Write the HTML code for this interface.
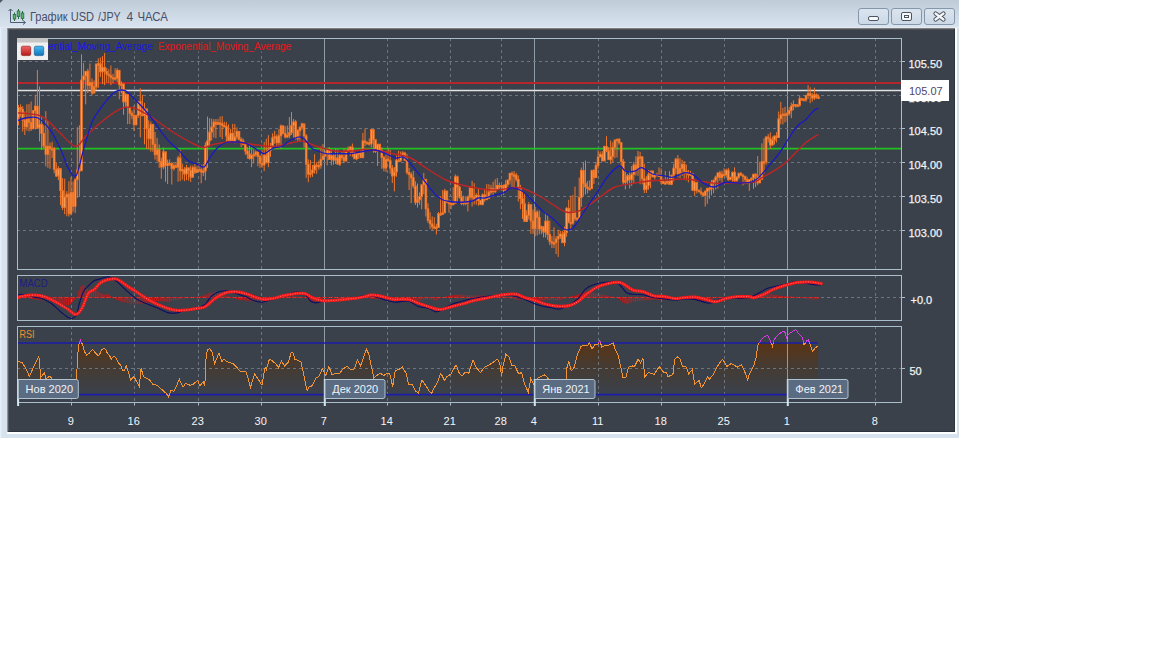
<!DOCTYPE html><html><head><meta charset="utf-8"><style>html,body{margin:0;padding:0;background:#fff;width:1152px;height:648px;overflow:hidden}svg{position:absolute;left:0;top:0;font-family:"Liberation Sans",sans-serif}</style></head><body>
<svg width="1152" height="648" viewBox="0 0 1152 648">
<defs><linearGradient id="tb" x1="0" y1="0" x2="0" y2="1"><stop offset="0" stop-color="#bfccd8"/><stop offset="1" stop-color="#d8e3ef"/></linearGradient><linearGradient id="btn" x1="0" y1="0" x2="0" y2="1"><stop offset="0" stop-color="#dbe5ef"/><stop offset="1" stop-color="#cbd8e5"/></linearGradient><linearGradient id="rsif" x1="0" y1="343" x2="0" y2="392" gradientUnits="userSpaceOnUse"><stop offset="0" stop-color="#5a3414"/><stop offset="0.45" stop-color="#463a30"/><stop offset="1" stop-color="#3b414a"/></linearGradient><linearGradient id="lr" x1="0" y1="0" x2="0" y2="1"><stop offset="0" stop-color="#f26464"/><stop offset="1" stop-color="#b41a1a"/></linearGradient><linearGradient id="lb" x1="0" y1="0" x2="0" y2="1"><stop offset="0" stop-color="#44bcf2"/><stop offset="1" stop-color="#1272ba"/></linearGradient><clipPath id="cm"><rect x="18" y="39" width="883" height="230"/></clipPath><clipPath id="cmacd"><rect x="18" y="276" width="883" height="44"/></clipPath><clipPath id="cr"><rect x="18" y="327" width="883" height="75"/></clipPath><clipPath id="above70"><rect x="0" y="0" width="1152" height="343"/></clipPath><clipPath id="below70"><rect x="0" y="343" width="1152" height="100"/></clipPath></defs>
<rect x="0" y="0" width="959" height="438" fill="#d6e3ef"/>
<rect x="0" y="28" width="1.5" height="410" fill="#e6eef7"/>
<rect x="0" y="0" width="959" height="27" fill="url(#tb)"/>
<rect x="0" y="27" width="959" height="1" fill="#e2eaf3"/>
<rect x="957" y="28" width="2" height="406" fill="#d8e0e7"/>
<rect x="7" y="28" width="950" height="406" fill="#fbfdff"/>
<rect x="7" y="28" width="948" height="404" fill="#3b414b"/>
<rect x="7" y="28" width="948" height="1" fill="#7e7d7b"/><rect x="8" y="29" width="947" height="1" fill="#50545a"/>
<rect x="7" y="28" width="1" height="404" fill="#8e949c"/><rect x="8" y="29" width="1" height="403" fill="#535962"/>
<rect x="954" y="29" width="1" height="403" fill="#30363e"/><rect x="8" y="431" width="947" height="1" fill="#2e333b"/>
<path d="M0 0 H3 L0 3 Z" fill="#505860"/>
<g stroke="#4c5a72" fill="none" stroke-width="1"><path d="M10.5 9 V22.5 H25"/><path d="M23 20.5 L25.5 22.5 L23 24.5"/><path d="M8.5 11 L10.5 9 L12.5 11"/></g>
<g stroke="#2f6a48" stroke-width="1"><path d="M14.5 12.5 V21 M18.5 9 V19 M22.5 11 V20.5"/></g>
<g fill="#5cb070" stroke="#2a6a44" stroke-width="0.8"><rect x="13.2" y="14.5" width="2.6" height="4.5"/><rect x="17.2" y="11" width="2.6" height="5.5"/><rect x="21.2" y="13" width="2.6" height="5.5"/></g>
<text x="29.9" y="20.8" font-size="12" fill="#484e68" textLength="64.2" lengthAdjust="spacingAndGlyphs">График USD</text>
<text x="98.1" y="20.8" font-size="12" fill="#484e68" textLength="22.6" lengthAdjust="spacingAndGlyphs">/JPY</text>
<text x="126.6" y="20.8" font-size="12" fill="#484e68">4</text>
<text x="137.4" y="20.8" font-size="12" fill="#484e68" textLength="30.5" lengthAdjust="spacingAndGlyphs">ЧАСА</text>
<rect x="858.5" y="8.5" width="30" height="16" rx="2.5" fill="url(#btn)" stroke="#8597ab"/>
<rect x="891.5" y="8.5" width="30" height="16" rx="2.5" fill="url(#btn)" stroke="#8597ab"/>
<rect x="924.5" y="8.5" width="30" height="16" rx="2.5" fill="url(#btn)" stroke="#8597ab"/>
<rect x="868.5" y="16.5" width="10" height="4" rx="1.5" fill="#f6f7f9" stroke="#4c5460"/>
<rect x="901.5" y="12.5" width="10" height="8" rx="1.5" fill="#f6f7f9" stroke="#4c5460"/><rect x="904.5" y="15.5" width="4" height="2" fill="none" stroke="#4c5460"/>
<path d="M935.5 13.5 L943.5 19.5 M943.5 13.5 L935.5 19.5" stroke="#4c5460" stroke-width="4.2" stroke-linecap="round"/><path d="M935.5 13.5 L943.5 19.5 M943.5 13.5 L935.5 19.5" stroke="#f6f7f9" stroke-width="2.2" stroke-linecap="round"/>
<g clip-path="url(#cr)"><g clip-path="url(#below70)"><polygon points="17.9,361.2 22.6,363.0 26.5,369.7 29.3,376.4 34.0,366.0 38.9,356.4 40.8,377.4 44.6,372.6 45.6,379.3 50.0,376.0 55.0,384.0 60.0,380.0 65.0,392.0 70.4,398.4 76.5,378.2 77.7,355.8 78.5,345.8 80.4,340.4 82.7,345.0 84.3,351.2 86.6,355.4 88.9,353.5 92.4,349.3 95.0,352.4 98.1,355.4 99.7,354.3 101.6,349.3 104.7,348.5 105.9,349.7 107.4,353.5 109.3,355.0 111.3,359.3 113.6,356.2 115.9,357.4 118.2,362.8 120.5,365.1 122.8,370.9 124.4,370.5 126.3,365.5 128.2,371.3 130.6,379.8 133.6,377.0 134.4,377.4 139.3,386.5 141.1,368.3 143.5,376.8 149.0,379.3 152.7,384.1 157.5,385.3 161.2,389.0 166.6,393.8 168.5,396.9 170.9,390.2 174.0,391.4 179.4,379.3 183.0,387.2 185.5,383.5 190.3,385.3 193.4,384.1 197.6,380.5 200.0,385.9 203.1,381.7 204.9,385.3 205.5,362.2 207.3,350.1 209.8,348.3 212.2,352.5 214.6,363.5 218.9,353.1 221.9,361.6 223.7,359.2 228.0,362.2 232.9,363.5 236.5,367.1 240.2,371.4 246.2,372.0 250.5,387.2 254.7,373.8 262.0,385.3 265.1,367.1 266.3,370.1 268.7,361.0 270.0,359.2 272.4,361.0 275.5,363.5 278.5,367.7 281.5,361.0 284.6,365.9 288.2,362.2 291.3,352.5 293.1,353.1 294.9,359.2 298.0,360.4 301.0,362.2 303.4,373.2 307.1,390.8 309.5,386.5 311.9,385.9 316.2,378.0 318.6,376.8 322.3,368.9 325.9,375.6 328.9,366.5 332.0,375.0 335.6,373.2 339.3,373.8 342.9,368.9 347.2,366.5 350.8,369.5 354.5,368.9 357.5,359.8 360.5,365.9 363.6,357.4 366.6,348.9 369.0,355.0 371.5,367.1 373.9,378.0 378.2,374.4 380.6,373.2 383.6,375.6 386.7,373.8 389.7,373.2 392.7,386.5 395.2,370.7 398.8,369.5 402.5,367.1 406.1,373.2 408.5,384.1 412.3,384.1 415.3,390.8 418.3,393.2 422.0,379.9 425.6,385.3 429.3,391.4 431.7,393.2 433.5,389.0 437.2,382.9 440.8,373.2 444.5,380.5 446.9,376.8 451.1,373.8 456.0,364.7 459.0,372.6 462.1,376.2 465.1,372.0 468.8,373.2 473.0,359.8 476.0,367.1 480.3,372.6 484.6,367.1 489.4,364.7 493.1,362.2 497.3,359.2 499.7,362.8 501.6,375.6 502.8,367.1 505.8,354.3 508.9,356.8 511.9,365.3 514.9,365.9 518.6,373.8 521.6,372.6 524.7,384.1 528.3,392.6 530.7,378.6 533.8,384.7 538.0,378.0 542.8,375.6 544.6,375.0 547.0,376.8 552.0,385.0 558.0,382.0 563.0,386.0 566.5,378.0 567.1,365.9 568.9,361.6 571.3,370.7 574.4,367.1 576.8,356.2 581.0,346.4 583.5,345.2 587.7,345.2 589.5,342.8 592.0,348.9 595.0,344.6 598.0,344.0 599.9,340.4 601.7,347.1 604.1,345.8 607.8,345.8 611.4,344.0 613.2,342.8 615.1,348.9 618.1,355.0 620.5,365.9 623.0,378.0 626.0,377.4 628.4,367.1 632.1,365.9 634.5,366.5 638.2,359.2 640.6,362.8 643.0,358.6 644.8,376.8 648.5,372.6 654.0,374.4 659.4,366.5 663.7,372.6 666.7,372.6 668.0,376.8 672.9,374.4 674.7,359.2 677.7,356.8 680.2,359.2 682.6,366.5 686.2,367.1 688.7,373.8 692.3,369.5 694.7,384.1 699.0,380.5 701.4,387.8 704.5,383.5 707.5,376.8 709.3,379.3 713.0,375.0 716.6,367.7 720.3,362.2 722.7,359.2 726.9,366.5 731.2,363.5 737.3,367.1 741.5,364.7 744.6,371.4 747.6,379.9 749.4,373.8 753.7,365.9 756.1,357.4 757.9,345.2 760.4,341.0 764.0,336.7 767.6,335.5 770.1,340.4 772.5,346.4 774.3,339.2 778.6,334.3 782.2,331.9 784.7,331.3 786.5,337.9 788.3,334.3 795.6,329.4 799.2,334.3 802.3,337.3 804.1,345.2 806.5,341.0 808.5,340.0 812.5,351.6 815.0,348.0 818.2,345.9 818.2,402.0 17.9,402.0" fill="url(#rsif)"/></g></g>
<line x1="71.5" y1="38" x2="71.5" y2="269" stroke="#6a757f" stroke-dasharray="3 3"/>
<line x1="134.5" y1="38" x2="134.5" y2="269" stroke="#6a757f" stroke-dasharray="3 3"/>
<line x1="198.5" y1="38" x2="198.5" y2="269" stroke="#6a757f" stroke-dasharray="3 3"/>
<line x1="261.5" y1="38" x2="261.5" y2="269" stroke="#6a757f" stroke-dasharray="3 3"/>
<line x1="387.5" y1="38" x2="387.5" y2="269" stroke="#6a757f" stroke-dasharray="3 3"/>
<line x1="450.5" y1="38" x2="450.5" y2="269" stroke="#6a757f" stroke-dasharray="3 3"/>
<line x1="501.5" y1="38" x2="501.5" y2="269" stroke="#6a757f" stroke-dasharray="3 3"/>
<line x1="598.5" y1="38" x2="598.5" y2="269" stroke="#6a757f" stroke-dasharray="3 3"/>
<line x1="661.5" y1="38" x2="661.5" y2="269" stroke="#6a757f" stroke-dasharray="3 3"/>
<line x1="724.5" y1="38" x2="724.5" y2="269" stroke="#6a757f" stroke-dasharray="3 3"/>
<line x1="875.5" y1="38" x2="875.5" y2="269" stroke="#6a757f" stroke-dasharray="3 3"/>
<line x1="324.5" y1="39" x2="324.5" y2="269" stroke="#8e9ba8"/>
<line x1="534.5" y1="39" x2="534.5" y2="269" stroke="#8e9ba8"/>
<line x1="787.5" y1="39" x2="787.5" y2="269" stroke="#8e9ba8"/>
<line x1="71.5" y1="275" x2="71.5" y2="320" stroke="#6a757f" stroke-dasharray="3 3"/>
<line x1="134.5" y1="275" x2="134.5" y2="320" stroke="#6a757f" stroke-dasharray="3 3"/>
<line x1="198.5" y1="275" x2="198.5" y2="320" stroke="#6a757f" stroke-dasharray="3 3"/>
<line x1="261.5" y1="275" x2="261.5" y2="320" stroke="#6a757f" stroke-dasharray="3 3"/>
<line x1="387.5" y1="275" x2="387.5" y2="320" stroke="#6a757f" stroke-dasharray="3 3"/>
<line x1="450.5" y1="275" x2="450.5" y2="320" stroke="#6a757f" stroke-dasharray="3 3"/>
<line x1="501.5" y1="275" x2="501.5" y2="320" stroke="#6a757f" stroke-dasharray="3 3"/>
<line x1="598.5" y1="275" x2="598.5" y2="320" stroke="#6a757f" stroke-dasharray="3 3"/>
<line x1="661.5" y1="275" x2="661.5" y2="320" stroke="#6a757f" stroke-dasharray="3 3"/>
<line x1="724.5" y1="275" x2="724.5" y2="320" stroke="#6a757f" stroke-dasharray="3 3"/>
<line x1="875.5" y1="275" x2="875.5" y2="320" stroke="#6a757f" stroke-dasharray="3 3"/>
<line x1="324.5" y1="276" x2="324.5" y2="320" stroke="#8e9ba8"/>
<line x1="534.5" y1="276" x2="534.5" y2="320" stroke="#8e9ba8"/>
<line x1="787.5" y1="276" x2="787.5" y2="320" stroke="#8e9ba8"/>
<line x1="71.5" y1="326" x2="71.5" y2="402" stroke="#6a757f" stroke-dasharray="3 3"/>
<line x1="134.5" y1="326" x2="134.5" y2="402" stroke="#6a757f" stroke-dasharray="3 3"/>
<line x1="198.5" y1="326" x2="198.5" y2="402" stroke="#6a757f" stroke-dasharray="3 3"/>
<line x1="261.5" y1="326" x2="261.5" y2="402" stroke="#6a757f" stroke-dasharray="3 3"/>
<line x1="387.5" y1="326" x2="387.5" y2="402" stroke="#6a757f" stroke-dasharray="3 3"/>
<line x1="450.5" y1="326" x2="450.5" y2="402" stroke="#6a757f" stroke-dasharray="3 3"/>
<line x1="501.5" y1="326" x2="501.5" y2="402" stroke="#6a757f" stroke-dasharray="3 3"/>
<line x1="598.5" y1="326" x2="598.5" y2="402" stroke="#6a757f" stroke-dasharray="3 3"/>
<line x1="661.5" y1="326" x2="661.5" y2="402" stroke="#6a757f" stroke-dasharray="3 3"/>
<line x1="724.5" y1="326" x2="724.5" y2="402" stroke="#6a757f" stroke-dasharray="3 3"/>
<line x1="875.5" y1="326" x2="875.5" y2="402" stroke="#6a757f" stroke-dasharray="3 3"/>
<line x1="324.5" y1="327" x2="324.5" y2="402" stroke="#8e9ba8"/>
<line x1="534.5" y1="327" x2="534.5" y2="402" stroke="#8e9ba8"/>
<line x1="787.5" y1="327" x2="787.5" y2="402" stroke="#8e9ba8"/>
<line x1="17" y1="61.5" x2="901" y2="61.5" stroke="#6a757f" stroke-dasharray="3 3"/>
<line x1="17" y1="95.5" x2="901" y2="95.5" stroke="#6a757f" stroke-dasharray="3 3"/>
<line x1="17" y1="128.5" x2="901" y2="128.5" stroke="#6a757f" stroke-dasharray="3 3"/>
<line x1="17" y1="162.5" x2="901" y2="162.5" stroke="#6a757f" stroke-dasharray="3 3"/>
<line x1="17" y1="196.5" x2="901" y2="196.5" stroke="#6a757f" stroke-dasharray="3 3"/>
<line x1="17" y1="230.5" x2="901" y2="230.5" stroke="#6a757f" stroke-dasharray="3 3"/>
<line x1="17" y1="297.5" x2="901" y2="297.5" stroke="#6a757f" stroke-dasharray="3 3"/>
<line x1="17" y1="368.5" x2="901" y2="368.5" stroke="#6a757f" stroke-dasharray="3 3"/>
<line x1="18" y1="83" x2="901" y2="83" stroke="#b3262c" stroke-width="2"/>
<line x1="18" y1="90.5" x2="901" y2="90.5" stroke="#e2e2e2" stroke-width="1.6"/>
<line x1="18" y1="148.6" x2="901" y2="148.6" stroke="#22c022" stroke-width="1.8"/>
<g clip-path="url(#cm)">
<line x1="18.5" y1="104.9" x2="18.5" y2="125.3" stroke="#f27628"/><line x1="20.6" y1="104.3" x2="20.6" y2="116.7" stroke="#f27628"/><line x1="22.7" y1="106.2" x2="22.7" y2="131.6" stroke="#f27628"/><line x1="24.8" y1="111.5" x2="24.8" y2="135.0" stroke="#f27628"/><line x1="26.9" y1="104.3" x2="26.9" y2="130.7" stroke="#f27628"/><line x1="29.0" y1="104.1" x2="29.0" y2="131.5" stroke="#f27628"/><line x1="31.1" y1="101.5" x2="31.1" y2="130.9" stroke="#f27628"/><line x1="33.2" y1="110.2" x2="33.2" y2="126.2" stroke="#f27628"/><line x1="35.3" y1="94.8" x2="35.3" y2="129.4" stroke="#f27628"/><line x1="37.4" y1="70.0" x2="37.4" y2="125.5" stroke="#f27628"/><line x1="39.5" y1="86.4" x2="39.5" y2="141.3" stroke="#f27628"/><line x1="41.6" y1="116.7" x2="41.6" y2="150.0" stroke="#f27628"/><line x1="43.7" y1="125.3" x2="43.7" y2="148.3" stroke="#f27628"/><line x1="45.8" y1="111.2" x2="45.8" y2="166.4" stroke="#f27628"/><line x1="47.9" y1="121.0" x2="47.9" y2="167.8" stroke="#f27628"/><line x1="50.0" y1="142.7" x2="50.0" y2="168.8" stroke="#f27628"/><line x1="52.1" y1="141.9" x2="52.1" y2="158.0" stroke="#f27628"/><line x1="54.2" y1="146.9" x2="54.2" y2="173.3" stroke="#f27628"/><line x1="56.3" y1="162.3" x2="56.3" y2="177.0" stroke="#f27628"/><line x1="58.4" y1="166.2" x2="58.4" y2="180.1" stroke="#f27628"/><line x1="60.5" y1="174.0" x2="60.5" y2="205.2" stroke="#f27628"/><line x1="62.6" y1="178.1" x2="62.6" y2="210.0" stroke="#f27628"/><line x1="64.7" y1="178.7" x2="64.7" y2="214.2" stroke="#f27628"/><line x1="66.8" y1="191.1" x2="66.8" y2="216.2" stroke="#f27628"/><line x1="68.9" y1="181.3" x2="68.9" y2="216.5" stroke="#f27628"/><line x1="71.0" y1="177.2" x2="71.0" y2="215.3" stroke="#f27628"/><line x1="73.1" y1="181.5" x2="73.1" y2="211.8" stroke="#f27628"/><line x1="75.2" y1="178.5" x2="75.2" y2="213.2" stroke="#f27628"/><line x1="77.3" y1="127.3" x2="77.3" y2="197.8" stroke="#f27628"/><line x1="79.4" y1="125.2" x2="79.4" y2="196.3" stroke="#f27628"/><line x1="81.5" y1="54.4" x2="81.5" y2="99.0" stroke="#f27628"/><line x1="83.6" y1="63.0" x2="83.6" y2="88.8" stroke="#f27628"/><line x1="85.7" y1="71.2" x2="85.7" y2="104.4" stroke="#f27628"/><line x1="87.8" y1="68.7" x2="87.8" y2="93.0" stroke="#f27628"/><line x1="89.9" y1="63.4" x2="89.9" y2="88.8" stroke="#f27628"/><line x1="92.0" y1="78.4" x2="92.0" y2="95.6" stroke="#f27628"/><line x1="94.1" y1="80.4" x2="94.1" y2="92.8" stroke="#f27628"/><line x1="96.2" y1="63.4" x2="96.2" y2="89.9" stroke="#f27628"/><line x1="98.3" y1="58.3" x2="98.3" y2="87.9" stroke="#f27628"/><line x1="100.4" y1="57.6" x2="100.4" y2="76.9" stroke="#f27628"/><line x1="102.5" y1="56.1" x2="102.5" y2="84.1" stroke="#f27628"/><line x1="104.6" y1="53.0" x2="104.6" y2="85.2" stroke="#f27628"/><line x1="106.7" y1="67.8" x2="106.7" y2="82.8" stroke="#f27628"/><line x1="108.8" y1="69.2" x2="108.8" y2="83.0" stroke="#f27628"/><line x1="110.9" y1="65.5" x2="110.9" y2="85.2" stroke="#f27628"/><line x1="113.0" y1="73.8" x2="113.0" y2="83.3" stroke="#f27628"/><line x1="115.1" y1="68.3" x2="115.1" y2="80.8" stroke="#f27628"/><line x1="117.2" y1="68.0" x2="117.2" y2="82.0" stroke="#f27628"/><line x1="119.3" y1="73.8" x2="119.3" y2="99.3" stroke="#f27628"/><line x1="121.4" y1="81.3" x2="121.4" y2="93.6" stroke="#f27628"/><line x1="123.5" y1="85.6" x2="123.5" y2="114.8" stroke="#f27628"/><line x1="125.6" y1="93.1" x2="125.6" y2="106.6" stroke="#f27628"/><line x1="127.7" y1="95.2" x2="127.7" y2="124.2" stroke="#f27628"/><line x1="129.8" y1="106.9" x2="129.8" y2="124.0" stroke="#f27628"/><line x1="131.9" y1="110.5" x2="131.9" y2="119.2" stroke="#f27628"/><line x1="134.0" y1="105.6" x2="134.0" y2="131.0" stroke="#f27628"/><line x1="136.1" y1="114.7" x2="136.1" y2="125.8" stroke="#f27628"/><line x1="138.2" y1="101.7" x2="138.2" y2="118.0" stroke="#f27628"/><line x1="140.3" y1="88.3" x2="140.3" y2="137.3" stroke="#f27628"/><line x1="142.4" y1="94.9" x2="142.4" y2="115.9" stroke="#f27628"/><line x1="144.5" y1="102.8" x2="144.5" y2="144.3" stroke="#f27628"/><line x1="146.6" y1="116.1" x2="146.6" y2="149.0" stroke="#f27628"/><line x1="148.7" y1="120.3" x2="148.7" y2="149.2" stroke="#f27628"/><line x1="150.8" y1="121.7" x2="150.8" y2="151.6" stroke="#f27628"/><line x1="152.9" y1="125.1" x2="152.9" y2="151.8" stroke="#f27628"/><line x1="155.0" y1="132.0" x2="155.0" y2="159.6" stroke="#f27628"/><line x1="157.1" y1="137.9" x2="157.1" y2="161.3" stroke="#f27628"/><line x1="159.2" y1="144.5" x2="159.2" y2="167.8" stroke="#f27628"/><line x1="161.3" y1="157.7" x2="161.3" y2="178.8" stroke="#f27628"/><line x1="163.4" y1="147.6" x2="163.4" y2="169.2" stroke="#f27628"/><line x1="165.5" y1="154.5" x2="165.5" y2="181.7" stroke="#f27628"/><line x1="167.6" y1="159.6" x2="167.6" y2="184.1" stroke="#f27628"/><line x1="169.7" y1="159.4" x2="169.7" y2="165.8" stroke="#f27628"/><line x1="171.8" y1="162.1" x2="171.8" y2="184.5" stroke="#f27628"/><line x1="173.9" y1="163.3" x2="173.9" y2="170.6" stroke="#f27628"/><line x1="176.0" y1="162.1" x2="176.0" y2="167.8" stroke="#f27628"/><line x1="178.1" y1="155.9" x2="178.1" y2="181.7" stroke="#f27628"/><line x1="180.2" y1="149.8" x2="180.2" y2="181.2" stroke="#f27628"/><line x1="182.3" y1="163.7" x2="182.3" y2="179.6" stroke="#f27628"/><line x1="184.4" y1="167.1" x2="184.4" y2="181.1" stroke="#f27628"/><line x1="186.5" y1="164.8" x2="186.5" y2="180.2" stroke="#f27628"/><line x1="188.6" y1="167.7" x2="188.6" y2="180.6" stroke="#f27628"/><line x1="190.7" y1="165.5" x2="190.7" y2="182.1" stroke="#f27628"/><line x1="192.8" y1="165.5" x2="192.8" y2="177.3" stroke="#f27628"/><line x1="194.9" y1="163.8" x2="194.9" y2="174.0" stroke="#f27628"/><line x1="197.0" y1="166.2" x2="197.0" y2="173.1" stroke="#f27628"/><line x1="199.1" y1="164.0" x2="199.1" y2="170.6" stroke="#f27628"/><line x1="201.2" y1="164.9" x2="201.2" y2="183.3" stroke="#f27628"/><line x1="203.3" y1="164.0" x2="203.3" y2="176.1" stroke="#f27628"/><line x1="205.4" y1="142.4" x2="205.4" y2="180.3" stroke="#f27628"/><line x1="207.5" y1="116.6" x2="207.5" y2="168.1" stroke="#f27628"/><line x1="209.6" y1="118.2" x2="209.6" y2="146.3" stroke="#f27628"/><line x1="211.7" y1="118.7" x2="211.7" y2="140.4" stroke="#f27628"/><line x1="213.8" y1="119.1" x2="213.8" y2="137.5" stroke="#f27628"/><line x1="215.9" y1="119.0" x2="215.9" y2="138.2" stroke="#f27628"/><line x1="218.0" y1="118.9" x2="218.0" y2="124.9" stroke="#f27628"/><line x1="220.1" y1="116.5" x2="220.1" y2="137.0" stroke="#f27628"/><line x1="222.2" y1="116.2" x2="222.2" y2="139.1" stroke="#f27628"/><line x1="224.3" y1="121.7" x2="224.3" y2="126.9" stroke="#f27628"/><line x1="226.4" y1="122.1" x2="226.4" y2="142.3" stroke="#f27628"/><line x1="228.5" y1="124.4" x2="228.5" y2="143.0" stroke="#f27628"/><line x1="230.6" y1="128.9" x2="230.6" y2="142.0" stroke="#f27628"/><line x1="232.7" y1="123.9" x2="232.7" y2="141.1" stroke="#f27628"/><line x1="234.8" y1="124.1" x2="234.8" y2="143.3" stroke="#f27628"/><line x1="236.9" y1="127.4" x2="236.9" y2="139.6" stroke="#f27628"/><line x1="239.0" y1="131.2" x2="239.0" y2="140.3" stroke="#f27628"/><line x1="241.1" y1="137.2" x2="241.1" y2="147.0" stroke="#f27628"/><line x1="243.2" y1="138.6" x2="243.2" y2="144.8" stroke="#f27628"/><line x1="245.3" y1="143.0" x2="245.3" y2="154.9" stroke="#f27628"/><line x1="247.4" y1="147.0" x2="247.4" y2="158.7" stroke="#f27628"/><line x1="249.5" y1="145.1" x2="249.5" y2="159.6" stroke="#f27628"/><line x1="251.6" y1="147.2" x2="251.6" y2="167.2" stroke="#f27628"/><line x1="253.7" y1="150.0" x2="253.7" y2="163.5" stroke="#f27628"/><line x1="255.8" y1="150.4" x2="255.8" y2="156.7" stroke="#f27628"/><line x1="257.9" y1="150.2" x2="257.9" y2="166.3" stroke="#f27628"/><line x1="260.0" y1="155.0" x2="260.0" y2="167.8" stroke="#f27628"/><line x1="262.1" y1="150.1" x2="262.1" y2="167.7" stroke="#f27628"/><line x1="264.2" y1="141.9" x2="264.2" y2="171.0" stroke="#f27628"/><line x1="266.3" y1="138.8" x2="266.3" y2="163.4" stroke="#f27628"/><line x1="268.4" y1="135.2" x2="268.4" y2="167.2" stroke="#f27628"/><line x1="270.5" y1="142.9" x2="270.5" y2="156.9" stroke="#f27628"/><line x1="272.6" y1="133.4" x2="272.6" y2="147.5" stroke="#f27628"/><line x1="274.7" y1="130.9" x2="274.7" y2="143.8" stroke="#f27628"/><line x1="276.8" y1="134.3" x2="276.8" y2="149.1" stroke="#f27628"/><line x1="278.9" y1="129.0" x2="278.9" y2="147.6" stroke="#f27628"/><line x1="281.0" y1="124.6" x2="281.0" y2="148.8" stroke="#f27628"/><line x1="283.1" y1="125.6" x2="283.1" y2="134.4" stroke="#f27628"/><line x1="285.2" y1="126.3" x2="285.2" y2="138.4" stroke="#f27628"/><line x1="287.3" y1="125.5" x2="287.3" y2="138.1" stroke="#f27628"/><line x1="289.4" y1="117.0" x2="289.4" y2="138.1" stroke="#f27628"/><line x1="291.5" y1="112.1" x2="291.5" y2="135.0" stroke="#f27628"/><line x1="293.6" y1="118.9" x2="293.6" y2="137.5" stroke="#f27628"/><line x1="295.7" y1="119.9" x2="295.7" y2="139.7" stroke="#f27628"/><line x1="297.8" y1="129.0" x2="297.8" y2="141.5" stroke="#f27628"/><line x1="299.9" y1="126.6" x2="299.9" y2="141.2" stroke="#f27628"/><line x1="302.0" y1="122.7" x2="302.0" y2="129.7" stroke="#f27628"/><line x1="304.1" y1="127.1" x2="304.1" y2="147.6" stroke="#f27628"/><line x1="306.2" y1="134.0" x2="306.2" y2="177.8" stroke="#f27628"/><line x1="308.3" y1="159.4" x2="308.3" y2="182.2" stroke="#f27628"/><line x1="310.4" y1="160.2" x2="310.4" y2="177.5" stroke="#f27628"/><line x1="312.5" y1="165.0" x2="312.5" y2="176.8" stroke="#f27628"/><line x1="314.6" y1="154.2" x2="314.6" y2="173.6" stroke="#f27628"/><line x1="316.7" y1="162.2" x2="316.7" y2="173.8" stroke="#f27628"/><line x1="318.8" y1="160.7" x2="318.8" y2="169.7" stroke="#f27628"/><line x1="320.9" y1="146.4" x2="320.9" y2="168.7" stroke="#f27628"/><line x1="323.0" y1="144.1" x2="323.0" y2="160.4" stroke="#f27628"/><line x1="325.1" y1="151.1" x2="325.1" y2="156.6" stroke="#f27628"/><line x1="327.2" y1="148.8" x2="327.2" y2="165.3" stroke="#f27628"/><line x1="329.3" y1="147.0" x2="329.3" y2="160.0" stroke="#f27628"/><line x1="331.4" y1="148.6" x2="331.4" y2="165.3" stroke="#f27628"/><line x1="333.5" y1="154.0" x2="333.5" y2="164.7" stroke="#f27628"/><line x1="335.6" y1="148.6" x2="335.6" y2="164.0" stroke="#f27628"/><line x1="337.7" y1="149.2" x2="337.7" y2="164.1" stroke="#f27628"/><line x1="339.8" y1="152.9" x2="339.8" y2="166.0" stroke="#f27628"/><line x1="341.9" y1="151.6" x2="341.9" y2="160.6" stroke="#f27628"/><line x1="344.0" y1="148.5" x2="344.0" y2="163.2" stroke="#f27628"/><line x1="346.1" y1="150.5" x2="346.1" y2="161.5" stroke="#f27628"/><line x1="348.2" y1="146.5" x2="348.2" y2="152.0" stroke="#f27628"/><line x1="350.3" y1="146.2" x2="350.3" y2="156.1" stroke="#f27628"/><line x1="352.4" y1="143.6" x2="352.4" y2="157.0" stroke="#f27628"/><line x1="354.5" y1="152.1" x2="354.5" y2="158.2" stroke="#f27628"/><line x1="356.6" y1="153.3" x2="356.6" y2="160.3" stroke="#f27628"/><line x1="358.7" y1="152.3" x2="358.7" y2="158.9" stroke="#f27628"/><line x1="360.8" y1="150.6" x2="360.8" y2="157.8" stroke="#f27628"/><line x1="362.9" y1="132.9" x2="362.9" y2="152.9" stroke="#f27628"/><line x1="365.0" y1="128.5" x2="365.0" y2="146.3" stroke="#f27628"/><line x1="367.1" y1="141.2" x2="367.1" y2="143.2" stroke="#f27628"/><line x1="369.2" y1="138.4" x2="369.2" y2="145.7" stroke="#f27628"/><line x1="371.3" y1="129.1" x2="371.3" y2="147.5" stroke="#f27628"/><line x1="373.4" y1="133.7" x2="373.4" y2="152.9" stroke="#f27628"/><line x1="375.5" y1="140.0" x2="375.5" y2="152.9" stroke="#f27628"/><line x1="377.6" y1="144.2" x2="377.6" y2="165.9" stroke="#f27628"/><line x1="379.7" y1="144.2" x2="379.7" y2="151.8" stroke="#f27628"/><line x1="381.8" y1="147.3" x2="381.8" y2="168.8" stroke="#f27628"/><line x1="383.9" y1="155.9" x2="383.9" y2="171.4" stroke="#f27628"/><line x1="386.0" y1="150.8" x2="386.0" y2="172.0" stroke="#f27628"/><line x1="388.1" y1="148.5" x2="388.1" y2="160.7" stroke="#f27628"/><line x1="390.2" y1="150.1" x2="390.2" y2="173.6" stroke="#f27628"/><line x1="392.3" y1="165.0" x2="392.3" y2="183.0" stroke="#f27628"/><line x1="394.4" y1="167.0" x2="394.4" y2="191.3" stroke="#f27628"/><line x1="396.5" y1="155.7" x2="396.5" y2="176.7" stroke="#f27628"/><line x1="398.6" y1="150.8" x2="398.6" y2="162.0" stroke="#f27628"/><line x1="400.7" y1="151.6" x2="400.7" y2="162.0" stroke="#f27628"/><line x1="402.8" y1="151.1" x2="402.8" y2="156.2" stroke="#f27628"/><line x1="404.9" y1="151.9" x2="404.9" y2="160.4" stroke="#f27628"/><line x1="407.0" y1="154.2" x2="407.0" y2="174.6" stroke="#f27628"/><line x1="409.1" y1="168.0" x2="409.1" y2="190.0" stroke="#f27628"/><line x1="411.2" y1="172.2" x2="411.2" y2="203.2" stroke="#f27628"/><line x1="413.3" y1="171.0" x2="413.3" y2="188.4" stroke="#f27628"/><line x1="415.4" y1="181.2" x2="415.4" y2="205.0" stroke="#f27628"/><line x1="417.5" y1="183.6" x2="417.5" y2="207.6" stroke="#f27628"/><line x1="419.6" y1="192.4" x2="419.6" y2="204.9" stroke="#f27628"/><line x1="421.7" y1="184.4" x2="421.7" y2="209.3" stroke="#f27628"/><line x1="423.8" y1="172.9" x2="423.8" y2="194.2" stroke="#f27628"/><line x1="425.9" y1="183.5" x2="425.9" y2="216.6" stroke="#f27628"/><line x1="428.0" y1="203.3" x2="428.0" y2="223.0" stroke="#f27628"/><line x1="430.1" y1="212.4" x2="430.1" y2="229.0" stroke="#f27628"/><line x1="432.2" y1="216.4" x2="432.2" y2="230.3" stroke="#f27628"/><line x1="434.3" y1="217.2" x2="434.3" y2="229.3" stroke="#f27628"/><line x1="436.4" y1="223.7" x2="436.4" y2="234.4" stroke="#f27628"/><line x1="438.5" y1="212.0" x2="438.5" y2="227.0" stroke="#f27628"/><line x1="440.6" y1="196.2" x2="440.6" y2="215.6" stroke="#f27628"/><line x1="442.7" y1="190.0" x2="442.7" y2="214.9" stroke="#f27628"/><line x1="444.8" y1="188.8" x2="444.8" y2="213.5" stroke="#f27628"/><line x1="446.9" y1="192.5" x2="446.9" y2="203.2" stroke="#f27628"/><line x1="449.0" y1="199.4" x2="449.0" y2="212.7" stroke="#f27628"/><line x1="451.1" y1="202.1" x2="451.1" y2="209.1" stroke="#f27628"/><line x1="453.2" y1="187.2" x2="453.2" y2="204.4" stroke="#f27628"/><line x1="455.3" y1="174.4" x2="455.3" y2="200.8" stroke="#f27628"/><line x1="457.4" y1="175.5" x2="457.4" y2="202.1" stroke="#f27628"/><line x1="459.5" y1="186.0" x2="459.5" y2="198.6" stroke="#f27628"/><line x1="461.6" y1="190.9" x2="461.6" y2="205.1" stroke="#f27628"/><line x1="463.7" y1="195.7" x2="463.7" y2="205.5" stroke="#f27628"/><line x1="465.8" y1="196.2" x2="465.8" y2="205.4" stroke="#f27628"/><line x1="467.9" y1="195.5" x2="467.9" y2="211.5" stroke="#f27628"/><line x1="470.0" y1="186.0" x2="470.0" y2="199.7" stroke="#f27628"/><line x1="472.1" y1="180.9" x2="472.1" y2="206.5" stroke="#f27628"/><line x1="474.2" y1="183.2" x2="474.2" y2="204.4" stroke="#f27628"/><line x1="476.3" y1="193.2" x2="476.3" y2="204.6" stroke="#f27628"/><line x1="478.4" y1="188.8" x2="478.4" y2="205.8" stroke="#f27628"/><line x1="480.5" y1="200.0" x2="480.5" y2="205.1" stroke="#f27628"/><line x1="482.6" y1="193.5" x2="482.6" y2="205.3" stroke="#f27628"/><line x1="484.7" y1="188.7" x2="484.7" y2="201.8" stroke="#f27628"/><line x1="486.8" y1="184.1" x2="486.8" y2="198.6" stroke="#f27628"/><line x1="488.9" y1="184.2" x2="488.9" y2="198.7" stroke="#f27628"/><line x1="491.0" y1="184.9" x2="491.0" y2="194.3" stroke="#f27628"/><line x1="493.1" y1="181.8" x2="493.1" y2="195.7" stroke="#f27628"/><line x1="495.2" y1="179.3" x2="495.2" y2="193.0" stroke="#f27628"/><line x1="497.3" y1="178.0" x2="497.3" y2="190.1" stroke="#f27628"/><line x1="499.4" y1="182.7" x2="499.4" y2="189.9" stroke="#f27628"/><line x1="501.5" y1="185.4" x2="501.5" y2="189.8" stroke="#f27628"/><line x1="503.6" y1="184.5" x2="503.6" y2="195.0" stroke="#f27628"/><line x1="505.7" y1="180.2" x2="505.7" y2="192.0" stroke="#f27628"/><line x1="507.8" y1="180.0" x2="507.8" y2="186.8" stroke="#f27628"/><line x1="509.9" y1="173.2" x2="509.9" y2="184.4" stroke="#f27628"/><line x1="512.0" y1="171.5" x2="512.0" y2="187.2" stroke="#f27628"/><line x1="514.1" y1="171.0" x2="514.1" y2="188.2" stroke="#f27628"/><line x1="516.2" y1="172.8" x2="516.2" y2="181.7" stroke="#f27628"/><line x1="518.3" y1="175.5" x2="518.3" y2="201.5" stroke="#f27628"/><line x1="520.4" y1="184.9" x2="520.4" y2="209.2" stroke="#f27628"/><line x1="522.5" y1="190.8" x2="522.5" y2="218.9" stroke="#f27628"/><line x1="524.6" y1="193.1" x2="524.6" y2="221.2" stroke="#f27628"/><line x1="526.7" y1="210.3" x2="526.7" y2="222.1" stroke="#f27628"/><line x1="528.8" y1="202.1" x2="528.8" y2="219.5" stroke="#f27628"/><line x1="530.9" y1="207.8" x2="530.9" y2="233.8" stroke="#f27628"/><line x1="533.0" y1="209.6" x2="533.0" y2="233.9" stroke="#f27628"/><line x1="535.1" y1="207.0" x2="535.1" y2="236.3" stroke="#f27628"/><line x1="537.2" y1="210.1" x2="537.2" y2="235.5" stroke="#f27628"/><line x1="539.3" y1="210.5" x2="539.3" y2="234.3" stroke="#f27628"/><line x1="541.4" y1="225.6" x2="541.4" y2="234.3" stroke="#f27628"/><line x1="543.5" y1="226.1" x2="543.5" y2="237.4" stroke="#f27628"/><line x1="545.6" y1="212.4" x2="545.6" y2="237.5" stroke="#f27628"/><line x1="547.7" y1="214.3" x2="547.7" y2="239.9" stroke="#f27628"/><line x1="549.8" y1="220.5" x2="549.8" y2="245.1" stroke="#f27628"/><line x1="551.9" y1="236.1" x2="551.9" y2="248.2" stroke="#f27628"/><line x1="554.0" y1="227.3" x2="554.0" y2="248.1" stroke="#f27628"/><line x1="556.1" y1="236.0" x2="556.1" y2="254.0" stroke="#f27628"/><line x1="558.2" y1="229.9" x2="558.2" y2="256.9" stroke="#f27628"/><line x1="560.3" y1="231.0" x2="560.3" y2="239.0" stroke="#f27628"/><line x1="562.4" y1="231.0" x2="562.4" y2="243.1" stroke="#f27628"/><line x1="564.5" y1="226.6" x2="564.5" y2="246.3" stroke="#f27628"/><line x1="566.6" y1="207.1" x2="566.6" y2="236.7" stroke="#f27628"/><line x1="568.7" y1="199.8" x2="568.7" y2="223.3" stroke="#f27628"/><line x1="570.8" y1="195.9" x2="570.8" y2="229.1" stroke="#f27628"/><line x1="572.9" y1="194.9" x2="572.9" y2="224.7" stroke="#f27628"/><line x1="575.0" y1="186.6" x2="575.0" y2="221.1" stroke="#f27628"/><line x1="577.1" y1="217.5" x2="577.1" y2="221.3" stroke="#f27628"/><line x1="579.2" y1="177.6" x2="579.2" y2="210.3" stroke="#f27628"/><line x1="581.3" y1="167.6" x2="581.3" y2="206.8" stroke="#f27628"/><line x1="583.4" y1="162.1" x2="583.4" y2="196.1" stroke="#f27628"/><line x1="585.5" y1="160.6" x2="585.5" y2="194.5" stroke="#f27628"/><line x1="587.6" y1="181.0" x2="587.6" y2="193.5" stroke="#f27628"/><line x1="589.7" y1="180.4" x2="589.7" y2="189.5" stroke="#f27628"/><line x1="591.8" y1="169.6" x2="591.8" y2="188.8" stroke="#f27628"/><line x1="593.9" y1="169.1" x2="593.9" y2="184.0" stroke="#f27628"/><line x1="596.0" y1="162.2" x2="596.0" y2="177.9" stroke="#f27628"/><line x1="598.1" y1="150.3" x2="598.1" y2="168.7" stroke="#f27628"/><line x1="600.2" y1="151.5" x2="600.2" y2="157.2" stroke="#f27628"/><line x1="602.3" y1="151.2" x2="602.3" y2="160.8" stroke="#f27628"/><line x1="604.4" y1="145.6" x2="604.4" y2="159.9" stroke="#f27628"/><line x1="606.5" y1="136.2" x2="606.5" y2="152.2" stroke="#f27628"/><line x1="608.6" y1="147.2" x2="608.6" y2="159.9" stroke="#f27628"/><line x1="610.7" y1="140.5" x2="610.7" y2="164.1" stroke="#f27628"/><line x1="612.8" y1="142.2" x2="612.8" y2="162.3" stroke="#f27628"/><line x1="614.9" y1="141.0" x2="614.9" y2="158.2" stroke="#f27628"/><line x1="617.0" y1="139.3" x2="617.0" y2="157.5" stroke="#f27628"/><line x1="619.1" y1="138.3" x2="619.1" y2="144.7" stroke="#f27628"/><line x1="621.2" y1="142.9" x2="621.2" y2="165.7" stroke="#f27628"/><line x1="623.3" y1="158.9" x2="623.3" y2="184.6" stroke="#f27628"/><line x1="625.4" y1="170.3" x2="625.4" y2="189.4" stroke="#f27628"/><line x1="627.5" y1="173.9" x2="627.5" y2="183.9" stroke="#f27628"/><line x1="629.6" y1="171.2" x2="629.6" y2="188.4" stroke="#f27628"/><line x1="631.7" y1="166.0" x2="631.7" y2="185.9" stroke="#f27628"/><line x1="633.8" y1="161.8" x2="633.8" y2="183.2" stroke="#f27628"/><line x1="635.9" y1="156.2" x2="635.9" y2="175.5" stroke="#f27628"/><line x1="638.0" y1="151.0" x2="638.0" y2="175.7" stroke="#f27628"/><line x1="640.1" y1="151.9" x2="640.1" y2="184.2" stroke="#f27628"/><line x1="642.2" y1="156.1" x2="642.2" y2="184.3" stroke="#f27628"/><line x1="644.3" y1="163.7" x2="644.3" y2="193.0" stroke="#f27628"/><line x1="646.4" y1="176.2" x2="646.4" y2="193.0" stroke="#f27628"/><line x1="648.5" y1="170.0" x2="648.5" y2="189.7" stroke="#f27628"/><line x1="650.6" y1="171.8" x2="650.6" y2="188.2" stroke="#f27628"/><line x1="652.7" y1="170.8" x2="652.7" y2="177.1" stroke="#f27628"/><line x1="654.8" y1="174.3" x2="654.8" y2="179.6" stroke="#f27628"/><line x1="656.9" y1="172.7" x2="656.9" y2="175.6" stroke="#f27628"/><line x1="659.0" y1="167.4" x2="659.0" y2="175.9" stroke="#f27628"/><line x1="661.1" y1="168.5" x2="661.1" y2="184.2" stroke="#f27628"/><line x1="663.2" y1="178.8" x2="663.2" y2="184.1" stroke="#f27628"/><line x1="665.3" y1="171.1" x2="665.3" y2="183.7" stroke="#f27628"/><line x1="667.4" y1="176.8" x2="667.4" y2="184.3" stroke="#f27628"/><line x1="669.5" y1="171.1" x2="669.5" y2="184.6" stroke="#f27628"/><line x1="671.6" y1="174.7" x2="671.6" y2="185.1" stroke="#f27628"/><line x1="673.7" y1="163.8" x2="673.7" y2="181.4" stroke="#f27628"/><line x1="675.8" y1="157.8" x2="675.8" y2="174.2" stroke="#f27628"/><line x1="677.9" y1="155.0" x2="677.9" y2="177.4" stroke="#f27628"/><line x1="680.0" y1="158.0" x2="680.0" y2="178.2" stroke="#f27628"/><line x1="682.1" y1="159.8" x2="682.1" y2="175.9" stroke="#f27628"/><line x1="684.2" y1="161.1" x2="684.2" y2="179.7" stroke="#f27628"/><line x1="686.3" y1="164.6" x2="686.3" y2="180.5" stroke="#f27628"/><line x1="688.4" y1="170.0" x2="688.4" y2="182.3" stroke="#f27628"/><line x1="690.5" y1="170.8" x2="690.5" y2="176.2" stroke="#f27628"/><line x1="692.6" y1="173.8" x2="692.6" y2="190.8" stroke="#f27628"/><line x1="694.7" y1="179.1" x2="694.7" y2="195.9" stroke="#f27628"/><line x1="696.8" y1="183.6" x2="696.8" y2="193.4" stroke="#f27628"/><line x1="698.9" y1="189.4" x2="698.9" y2="191.9" stroke="#f27628"/><line x1="701.0" y1="187.5" x2="701.0" y2="195.3" stroke="#f27628"/><line x1="703.1" y1="192.7" x2="703.1" y2="195.7" stroke="#f27628"/><line x1="705.2" y1="190.1" x2="705.2" y2="206.6" stroke="#f27628"/><line x1="707.3" y1="187.9" x2="707.3" y2="203.9" stroke="#f27628"/><line x1="709.4" y1="186.1" x2="709.4" y2="198.9" stroke="#f27628"/><line x1="711.5" y1="180.1" x2="711.5" y2="195.4" stroke="#f27628"/><line x1="713.6" y1="179.4" x2="713.6" y2="193.3" stroke="#f27628"/><line x1="715.7" y1="175.6" x2="715.7" y2="189.6" stroke="#f27628"/><line x1="717.8" y1="172.8" x2="717.8" y2="188.5" stroke="#f27628"/><line x1="719.9" y1="170.6" x2="719.9" y2="180.8" stroke="#f27628"/><line x1="722.0" y1="170.8" x2="722.0" y2="183.9" stroke="#f27628"/><line x1="724.1" y1="168.4" x2="724.1" y2="175.4" stroke="#f27628"/><line x1="726.2" y1="168.7" x2="726.2" y2="177.8" stroke="#f27628"/><line x1="728.3" y1="167.9" x2="728.3" y2="180.9" stroke="#f27628"/><line x1="730.4" y1="176.8" x2="730.4" y2="180.3" stroke="#f27628"/><line x1="732.5" y1="171.5" x2="732.5" y2="181.7" stroke="#f27628"/><line x1="734.6" y1="167.4" x2="734.6" y2="182.7" stroke="#f27628"/><line x1="736.7" y1="176.3" x2="736.7" y2="181.3" stroke="#f27628"/><line x1="738.8" y1="172.5" x2="738.8" y2="179.3" stroke="#f27628"/><line x1="740.9" y1="172.0" x2="740.9" y2="175.4" stroke="#f27628"/><line x1="743.0" y1="173.8" x2="743.0" y2="185.4" stroke="#f27628"/><line x1="745.1" y1="176.6" x2="745.1" y2="184.2" stroke="#f27628"/><line x1="747.2" y1="176.9" x2="747.2" y2="184.0" stroke="#f27628"/><line x1="749.3" y1="180.0" x2="749.3" y2="190.9" stroke="#f27628"/><line x1="751.4" y1="177.3" x2="751.4" y2="182.7" stroke="#f27628"/><line x1="753.5" y1="174.1" x2="753.5" y2="188.8" stroke="#f27628"/><line x1="755.6" y1="173.3" x2="755.6" y2="187.1" stroke="#f27628"/><line x1="757.7" y1="156.1" x2="757.7" y2="185.2" stroke="#f27628"/><line x1="759.8" y1="161.8" x2="759.8" y2="182.0" stroke="#f27628"/><line x1="761.9" y1="143.4" x2="761.9" y2="176.7" stroke="#f27628"/><line x1="764.0" y1="138.4" x2="764.0" y2="173.5" stroke="#f27628"/><line x1="766.1" y1="136.0" x2="766.1" y2="164.7" stroke="#f27628"/><line x1="768.2" y1="134.1" x2="768.2" y2="142.5" stroke="#f27628"/><line x1="770.3" y1="132.4" x2="770.3" y2="149.0" stroke="#f27628"/><line x1="772.4" y1="136.5" x2="772.4" y2="145.9" stroke="#f27628"/><line x1="774.5" y1="135.7" x2="774.5" y2="144.5" stroke="#f27628"/><line x1="776.6" y1="132.2" x2="776.6" y2="142.5" stroke="#f27628"/><line x1="778.7" y1="111.5" x2="778.7" y2="132.7" stroke="#f27628"/><line x1="780.8" y1="101.9" x2="780.8" y2="124.3" stroke="#f27628"/><line x1="782.9" y1="107.9" x2="782.9" y2="124.4" stroke="#f27628"/><line x1="785.0" y1="106.8" x2="785.0" y2="122.4" stroke="#f27628"/><line x1="787.1" y1="112.1" x2="787.1" y2="121.5" stroke="#f27628"/><line x1="789.2" y1="107.1" x2="789.2" y2="115.6" stroke="#f27628"/><line x1="791.3" y1="102.7" x2="791.3" y2="118.2" stroke="#f27628"/><line x1="793.4" y1="100.4" x2="793.4" y2="110.2" stroke="#f27628"/><line x1="795.5" y1="104.3" x2="795.5" y2="107.5" stroke="#f27628"/><line x1="797.6" y1="103.9" x2="797.6" y2="106.5" stroke="#f27628"/><line x1="799.7" y1="95.9" x2="799.7" y2="106.5" stroke="#f27628"/><line x1="801.8" y1="97.9" x2="801.8" y2="100.2" stroke="#f27628"/><line x1="803.9" y1="98.3" x2="803.9" y2="101.1" stroke="#f27628"/><line x1="806.0" y1="94.8" x2="806.0" y2="101.8" stroke="#f27628"/><line x1="808.1" y1="85.1" x2="808.1" y2="98.9" stroke="#f27628"/><line x1="810.2" y1="87.3" x2="810.2" y2="103.2" stroke="#f27628"/><line x1="812.3" y1="93.1" x2="812.3" y2="101.6" stroke="#f27628"/><line x1="814.4" y1="87.7" x2="814.4" y2="99.9" stroke="#f27628"/><line x1="816.5" y1="93.5" x2="816.5" y2="98.7" stroke="#f27628"/><line x1="818.6" y1="94.5" x2="818.6" y2="97.5" stroke="#f27628"/><rect x="17.7" y="107.5" width="1.6" height="10.8" fill="#ffb070" stroke="#ee7224" stroke-width="0.9"/><rect x="19.8" y="107.5" width="1.6" height="1.8" fill="#ff9a50" stroke="#ee7224" stroke-width="0.9"/><rect x="21.9" y="109.3" width="1.6" height="10.9" fill="#ff9a50" stroke="#ee7224" stroke-width="0.9"/><rect x="24.0" y="120.2" width="1.6" height="6.6" fill="#ff9a50" stroke="#ee7224" stroke-width="0.9"/><rect x="26.1" y="119.1" width="1.6" height="7.7" fill="#ffb070" stroke="#ee7224" stroke-width="0.9"/><rect x="28.2" y="119.1" width="1.6" height="3.5" fill="#ff9a50" stroke="#ee7224" stroke-width="0.9"/><rect x="30.3" y="122.6" width="1.6" height="6.3" fill="#ff9a50" stroke="#ee7224" stroke-width="0.9"/><rect x="32.4" y="110.7" width="1.6" height="18.1" fill="#ffb070" stroke="#ee7224" stroke-width="0.9"/><rect x="34.5" y="106.2" width="1.6" height="4.6" fill="#ffb070" stroke="#ee7224" stroke-width="0.9"/><rect x="36.6" y="106.2" width="1.6" height="22.0" fill="#ff9a50" stroke="#ee7224" stroke-width="0.9"/><rect x="38.7" y="124.3" width="1.6" height="3.9" fill="#ffb070" stroke="#ee7224" stroke-width="0.9"/><rect x="40.8" y="124.3" width="1.6" height="9.2" fill="#ff9a50" stroke="#ee7224" stroke-width="0.9"/><rect x="42.9" y="133.5" width="1.6" height="12.7" fill="#ff9a50" stroke="#ee7224" stroke-width="0.9"/><rect x="45.0" y="146.2" width="1.6" height="8.0" fill="#ff9a50" stroke="#ee7224" stroke-width="0.9"/><rect x="47.1" y="146.3" width="1.6" height="7.9" fill="#ffb070" stroke="#ee7224" stroke-width="0.9"/><rect x="49.2" y="146.3" width="1.6" height="2.3" fill="#ff9a50" stroke="#ee7224" stroke-width="0.9"/><rect x="51.3" y="148.6" width="1.6" height="1.5" fill="#ff9a50" stroke="#ee7224" stroke-width="0.9"/><rect x="53.4" y="148.7" width="1.6" height="20.5" fill="#ff9a50" stroke="#ee7224" stroke-width="0.9"/><rect x="55.5" y="169.3" width="1.6" height="6.7" fill="#ff9a50" stroke="#ee7224" stroke-width="0.9"/><rect x="57.6" y="168.6" width="1.6" height="7.3" fill="#ffb070" stroke="#ee7224" stroke-width="0.9"/><rect x="59.7" y="168.6" width="1.6" height="22.0" fill="#ff9a50" stroke="#ee7224" stroke-width="0.9"/><rect x="61.8" y="190.6" width="1.6" height="16.9" fill="#ff9a50" stroke="#ee7224" stroke-width="0.9"/><rect x="63.9" y="197.0" width="1.6" height="10.6" fill="#ffb070" stroke="#ee7224" stroke-width="0.9"/><rect x="66.0" y="194.2" width="1.6" height="2.8" fill="#ffb070" stroke="#ee7224" stroke-width="0.9"/><rect x="68.1" y="194.2" width="1.6" height="19.5" fill="#ff9a50" stroke="#ee7224" stroke-width="0.9"/><rect x="70.2" y="192.3" width="1.6" height="21.4" fill="#ffb070" stroke="#ee7224" stroke-width="0.9"/><rect x="72.3" y="192.3" width="1.6" height="14.0" fill="#ff9a50" stroke="#ee7224" stroke-width="0.9"/><rect x="74.4" y="179.7" width="1.6" height="26.6" fill="#ffb070" stroke="#ee7224" stroke-width="0.9"/><rect x="76.5" y="169.9" width="1.6" height="9.8" fill="#ffb070" stroke="#ee7224" stroke-width="0.9"/><rect x="78.6" y="169.9" width="1.6" height="1.5" fill="#ff9a50" stroke="#ee7224" stroke-width="0.9"/><rect x="80.7" y="80.0" width="1.6" height="90.7" fill="#ffb070" stroke="#ee7224" stroke-width="0.9"/><rect x="82.8" y="76.0" width="1.6" height="4.0" fill="#ffb070" stroke="#ee7224" stroke-width="0.9"/><rect x="84.9" y="71.3" width="1.6" height="4.7" fill="#ffb070" stroke="#ee7224" stroke-width="0.9"/><rect x="87.0" y="71.3" width="1.6" height="14.0" fill="#ff9a50" stroke="#ee7224" stroke-width="0.9"/><rect x="89.1" y="82.5" width="1.6" height="2.8" fill="#ffb070" stroke="#ee7224" stroke-width="0.9"/><rect x="91.2" y="82.5" width="1.6" height="10.6" fill="#ff9a50" stroke="#ee7224" stroke-width="0.9"/><rect x="93.3" y="86.9" width="1.6" height="6.2" fill="#ffb070" stroke="#ee7224" stroke-width="0.9"/><rect x="95.4" y="64.2" width="1.6" height="22.7" fill="#ffb070" stroke="#ee7224" stroke-width="0.9"/><rect x="97.5" y="63.7" width="1.6" height="1.5" fill="#ffb070" stroke="#ee7224" stroke-width="0.9"/><rect x="99.6" y="63.7" width="1.6" height="8.1" fill="#ff9a50" stroke="#ee7224" stroke-width="0.9"/><rect x="101.7" y="67.4" width="1.6" height="4.4" fill="#ffb070" stroke="#ee7224" stroke-width="0.9"/><rect x="103.8" y="67.4" width="1.6" height="4.1" fill="#ff9a50" stroke="#ee7224" stroke-width="0.9"/><rect x="105.9" y="71.5" width="1.6" height="2.7" fill="#ff9a50" stroke="#ee7224" stroke-width="0.9"/><rect x="108.0" y="74.2" width="1.6" height="1.5" fill="#ff9a50" stroke="#ee7224" stroke-width="0.9"/><rect x="110.1" y="75.7" width="1.6" height="1.8" fill="#ff9a50" stroke="#ee7224" stroke-width="0.9"/><rect x="112.2" y="77.5" width="1.6" height="1.5" fill="#ff9a50" stroke="#ee7224" stroke-width="0.9"/><rect x="114.3" y="77.8" width="1.6" height="1.5" fill="#ff9a50" stroke="#ee7224" stroke-width="0.9"/><rect x="116.4" y="70.3" width="1.6" height="8.0" fill="#ffb070" stroke="#ee7224" stroke-width="0.9"/><rect x="118.5" y="70.3" width="1.6" height="14.4" fill="#ff9a50" stroke="#ee7224" stroke-width="0.9"/><rect x="120.6" y="83.9" width="1.6" height="1.5" fill="#ffb070" stroke="#ee7224" stroke-width="0.9"/><rect x="122.7" y="83.9" width="1.6" height="18.0" fill="#ff9a50" stroke="#ee7224" stroke-width="0.9"/><rect x="124.8" y="94.4" width="1.6" height="7.5" fill="#ffb070" stroke="#ee7224" stroke-width="0.9"/><rect x="126.9" y="94.4" width="1.6" height="13.2" fill="#ff9a50" stroke="#ee7224" stroke-width="0.9"/><rect x="129.0" y="107.6" width="1.6" height="5.6" fill="#ff9a50" stroke="#ee7224" stroke-width="0.9"/><rect x="131.1" y="113.2" width="1.6" height="2.3" fill="#ff9a50" stroke="#ee7224" stroke-width="0.9"/><rect x="133.2" y="115.5" width="1.6" height="9.1" fill="#ff9a50" stroke="#ee7224" stroke-width="0.9"/><rect x="135.3" y="115.5" width="1.6" height="9.1" fill="#ffb070" stroke="#ee7224" stroke-width="0.9"/><rect x="137.4" y="101.5" width="1.6" height="14.0" fill="#ffb070" stroke="#ee7224" stroke-width="0.9"/><rect x="139.5" y="101.5" width="1.6" height="12.8" fill="#ff9a50" stroke="#ee7224" stroke-width="0.9"/><rect x="141.6" y="114.3" width="1.6" height="1.5" fill="#ff9a50" stroke="#ee7224" stroke-width="0.9"/><rect x="143.7" y="108.9" width="1.6" height="6.7" fill="#ffb070" stroke="#ee7224" stroke-width="0.9"/><rect x="145.8" y="108.9" width="1.6" height="19.7" fill="#ff9a50" stroke="#ee7224" stroke-width="0.9"/><rect x="147.9" y="128.6" width="1.6" height="10.1" fill="#ff9a50" stroke="#ee7224" stroke-width="0.9"/><rect x="150.0" y="124.4" width="1.6" height="14.3" fill="#ffb070" stroke="#ee7224" stroke-width="0.9"/><rect x="152.1" y="124.4" width="1.6" height="19.9" fill="#ff9a50" stroke="#ee7224" stroke-width="0.9"/><rect x="154.2" y="144.3" width="1.6" height="10.4" fill="#ff9a50" stroke="#ee7224" stroke-width="0.9"/><rect x="156.3" y="149.8" width="1.6" height="4.9" fill="#ffb070" stroke="#ee7224" stroke-width="0.9"/><rect x="158.4" y="149.8" width="1.6" height="11.8" fill="#ff9a50" stroke="#ee7224" stroke-width="0.9"/><rect x="160.5" y="161.5" width="1.6" height="5.5" fill="#ff9a50" stroke="#ee7224" stroke-width="0.9"/><rect x="162.6" y="151.8" width="1.6" height="15.2" fill="#ffb070" stroke="#ee7224" stroke-width="0.9"/><rect x="164.7" y="151.8" width="1.6" height="13.7" fill="#ff9a50" stroke="#ee7224" stroke-width="0.9"/><rect x="166.8" y="163.5" width="1.6" height="2.0" fill="#ffb070" stroke="#ee7224" stroke-width="0.9"/><rect x="168.9" y="163.5" width="1.6" height="1.5" fill="#ffb070" stroke="#ee7224" stroke-width="0.9"/><rect x="171.0" y="163.5" width="1.6" height="5.0" fill="#ff9a50" stroke="#ee7224" stroke-width="0.9"/><rect x="173.1" y="165.6" width="1.6" height="2.9" fill="#ffb070" stroke="#ee7224" stroke-width="0.9"/><rect x="175.2" y="165.6" width="1.6" height="1.6" fill="#ff9a50" stroke="#ee7224" stroke-width="0.9"/><rect x="177.3" y="158.0" width="1.6" height="9.2" fill="#ffb070" stroke="#ee7224" stroke-width="0.9"/><rect x="179.4" y="158.0" width="1.6" height="12.8" fill="#ff9a50" stroke="#ee7224" stroke-width="0.9"/><rect x="181.5" y="169.5" width="1.6" height="1.5" fill="#ffb070" stroke="#ee7224" stroke-width="0.9"/><rect x="183.6" y="169.5" width="1.6" height="4.5" fill="#ff9a50" stroke="#ee7224" stroke-width="0.9"/><rect x="185.7" y="167.9" width="1.6" height="6.1" fill="#ffb070" stroke="#ee7224" stroke-width="0.9"/><rect x="187.8" y="167.9" width="1.6" height="2.6" fill="#ff9a50" stroke="#ee7224" stroke-width="0.9"/><rect x="189.9" y="170.5" width="1.6" height="6.7" fill="#ff9a50" stroke="#ee7224" stroke-width="0.9"/><rect x="192.0" y="167.7" width="1.6" height="9.5" fill="#ffb070" stroke="#ee7224" stroke-width="0.9"/><rect x="194.1" y="167.7" width="1.6" height="4.7" fill="#ff9a50" stroke="#ee7224" stroke-width="0.9"/><rect x="196.2" y="169.7" width="1.6" height="2.6" fill="#ffb070" stroke="#ee7224" stroke-width="0.9"/><rect x="198.3" y="169.7" width="1.6" height="1.5" fill="#ff9a50" stroke="#ee7224" stroke-width="0.9"/><rect x="200.4" y="169.8" width="1.6" height="2.2" fill="#ff9a50" stroke="#ee7224" stroke-width="0.9"/><rect x="202.5" y="171.0" width="1.6" height="1.5" fill="#ffb070" stroke="#ee7224" stroke-width="0.9"/><rect x="204.6" y="145.8" width="1.6" height="25.2" fill="#ffb070" stroke="#ee7224" stroke-width="0.9"/><rect x="206.7" y="140.7" width="1.6" height="5.0" fill="#ffb070" stroke="#ee7224" stroke-width="0.9"/><rect x="208.8" y="132.0" width="1.6" height="8.8" fill="#ffb070" stroke="#ee7224" stroke-width="0.9"/><rect x="210.9" y="127.0" width="1.6" height="5.0" fill="#ffb070" stroke="#ee7224" stroke-width="0.9"/><rect x="213.0" y="122.1" width="1.6" height="4.9" fill="#ffb070" stroke="#ee7224" stroke-width="0.9"/><rect x="215.1" y="122.1" width="1.6" height="2.2" fill="#ff9a50" stroke="#ee7224" stroke-width="0.9"/><rect x="217.2" y="122.8" width="1.6" height="1.5" fill="#ffb070" stroke="#ee7224" stroke-width="0.9"/><rect x="219.3" y="122.8" width="1.6" height="1.5" fill="#ff9a50" stroke="#ee7224" stroke-width="0.9"/><rect x="221.4" y="123.6" width="1.6" height="1.9" fill="#ff9a50" stroke="#ee7224" stroke-width="0.9"/><rect x="223.5" y="125.5" width="1.6" height="1.5" fill="#ff9a50" stroke="#ee7224" stroke-width="0.9"/><rect x="225.6" y="126.5" width="1.6" height="9.6" fill="#ff9a50" stroke="#ee7224" stroke-width="0.9"/><rect x="227.7" y="136.1" width="1.6" height="4.5" fill="#ff9a50" stroke="#ee7224" stroke-width="0.9"/><rect x="229.8" y="133.3" width="1.6" height="7.4" fill="#ffb070" stroke="#ee7224" stroke-width="0.9"/><rect x="231.9" y="133.3" width="1.6" height="7.8" fill="#ff9a50" stroke="#ee7224" stroke-width="0.9"/><rect x="234.0" y="136.9" width="1.6" height="4.2" fill="#ffb070" stroke="#ee7224" stroke-width="0.9"/><rect x="236.1" y="131.4" width="1.6" height="5.4" fill="#ffb070" stroke="#ee7224" stroke-width="0.9"/><rect x="238.2" y="131.4" width="1.6" height="7.8" fill="#ff9a50" stroke="#ee7224" stroke-width="0.9"/><rect x="240.3" y="139.2" width="1.6" height="1.8" fill="#ff9a50" stroke="#ee7224" stroke-width="0.9"/><rect x="242.4" y="141.1" width="1.6" height="3.6" fill="#ff9a50" stroke="#ee7224" stroke-width="0.9"/><rect x="244.5" y="144.6" width="1.6" height="6.4" fill="#ff9a50" stroke="#ee7224" stroke-width="0.9"/><rect x="246.6" y="151.0" width="1.6" height="2.9" fill="#ff9a50" stroke="#ee7224" stroke-width="0.9"/><rect x="248.7" y="153.9" width="1.6" height="4.7" fill="#ff9a50" stroke="#ee7224" stroke-width="0.9"/><rect x="250.8" y="155.5" width="1.6" height="3.2" fill="#ffb070" stroke="#ee7224" stroke-width="0.9"/><rect x="252.9" y="154.4" width="1.6" height="1.5" fill="#ffb070" stroke="#ee7224" stroke-width="0.9"/><rect x="255.0" y="152.1" width="1.6" height="2.3" fill="#ffb070" stroke="#ee7224" stroke-width="0.9"/><rect x="257.1" y="152.1" width="1.6" height="4.3" fill="#ff9a50" stroke="#ee7224" stroke-width="0.9"/><rect x="259.2" y="156.4" width="1.6" height="6.6" fill="#ff9a50" stroke="#ee7224" stroke-width="0.9"/><rect x="261.3" y="163.0" width="1.6" height="1.8" fill="#ff9a50" stroke="#ee7224" stroke-width="0.9"/><rect x="263.4" y="155.3" width="1.6" height="9.6" fill="#ffb070" stroke="#ee7224" stroke-width="0.9"/><rect x="265.5" y="155.3" width="1.6" height="7.4" fill="#ff9a50" stroke="#ee7224" stroke-width="0.9"/><rect x="267.6" y="150.4" width="1.6" height="12.3" fill="#ffb070" stroke="#ee7224" stroke-width="0.9"/><rect x="269.7" y="146.3" width="1.6" height="4.1" fill="#ffb070" stroke="#ee7224" stroke-width="0.9"/><rect x="271.8" y="137.8" width="1.6" height="8.5" fill="#ffb070" stroke="#ee7224" stroke-width="0.9"/><rect x="273.9" y="136.7" width="1.6" height="1.5" fill="#ffb070" stroke="#ee7224" stroke-width="0.9"/><rect x="276.0" y="136.7" width="1.6" height="6.0" fill="#ff9a50" stroke="#ee7224" stroke-width="0.9"/><rect x="278.1" y="135.8" width="1.6" height="6.9" fill="#ffb070" stroke="#ee7224" stroke-width="0.9"/><rect x="280.2" y="125.9" width="1.6" height="9.9" fill="#ffb070" stroke="#ee7224" stroke-width="0.9"/><rect x="282.3" y="125.9" width="1.6" height="7.6" fill="#ff9a50" stroke="#ee7224" stroke-width="0.9"/><rect x="284.4" y="133.5" width="1.6" height="3.5" fill="#ff9a50" stroke="#ee7224" stroke-width="0.9"/><rect x="286.5" y="135.3" width="1.6" height="1.7" fill="#ffb070" stroke="#ee7224" stroke-width="0.9"/><rect x="288.6" y="132.7" width="1.6" height="2.6" fill="#ffb070" stroke="#ee7224" stroke-width="0.9"/><rect x="290.7" y="125.7" width="1.6" height="7.0" fill="#ffb070" stroke="#ee7224" stroke-width="0.9"/><rect x="292.8" y="121.9" width="1.6" height="3.7" fill="#ffb070" stroke="#ee7224" stroke-width="0.9"/><rect x="294.9" y="121.9" width="1.6" height="16.6" fill="#ff9a50" stroke="#ee7224" stroke-width="0.9"/><rect x="297.0" y="130.7" width="1.6" height="7.8" fill="#ffb070" stroke="#ee7224" stroke-width="0.9"/><rect x="299.1" y="127.2" width="1.6" height="3.6" fill="#ffb070" stroke="#ee7224" stroke-width="0.9"/><rect x="301.2" y="123.9" width="1.6" height="3.3" fill="#ffb070" stroke="#ee7224" stroke-width="0.9"/><rect x="303.3" y="123.9" width="1.6" height="12.0" fill="#ff9a50" stroke="#ee7224" stroke-width="0.9"/><rect x="305.4" y="135.9" width="1.6" height="28.2" fill="#ff9a50" stroke="#ee7224" stroke-width="0.9"/><rect x="307.5" y="164.1" width="1.6" height="10.0" fill="#ff9a50" stroke="#ee7224" stroke-width="0.9"/><rect x="309.6" y="172.9" width="1.6" height="1.5" fill="#ffb070" stroke="#ee7224" stroke-width="0.9"/><rect x="311.7" y="170.0" width="1.6" height="2.8" fill="#ffb070" stroke="#ee7224" stroke-width="0.9"/><rect x="313.8" y="165.1" width="1.6" height="4.9" fill="#ffb070" stroke="#ee7224" stroke-width="0.9"/><rect x="315.9" y="165.1" width="1.6" height="1.5" fill="#ff9a50" stroke="#ee7224" stroke-width="0.9"/><rect x="318.0" y="165.4" width="1.6" height="1.5" fill="#ffb070" stroke="#ee7224" stroke-width="0.9"/><rect x="320.1" y="159.4" width="1.6" height="5.9" fill="#ffb070" stroke="#ee7224" stroke-width="0.9"/><rect x="322.2" y="156.1" width="1.6" height="3.3" fill="#ffb070" stroke="#ee7224" stroke-width="0.9"/><rect x="324.3" y="154.3" width="1.6" height="1.8" fill="#ffb070" stroke="#ee7224" stroke-width="0.9"/><rect x="326.4" y="149.5" width="1.6" height="4.8" fill="#ffb070" stroke="#ee7224" stroke-width="0.9"/><rect x="328.5" y="149.5" width="1.6" height="9.9" fill="#ff9a50" stroke="#ee7224" stroke-width="0.9"/><rect x="330.6" y="155.6" width="1.6" height="3.8" fill="#ffb070" stroke="#ee7224" stroke-width="0.9"/><rect x="332.7" y="155.6" width="1.6" height="4.5" fill="#ff9a50" stroke="#ee7224" stroke-width="0.9"/><rect x="334.8" y="158.0" width="1.6" height="2.1" fill="#ffb070" stroke="#ee7224" stroke-width="0.9"/><rect x="336.9" y="158.0" width="1.6" height="6.2" fill="#ff9a50" stroke="#ee7224" stroke-width="0.9"/><rect x="339.0" y="155.3" width="1.6" height="8.9" fill="#ffb070" stroke="#ee7224" stroke-width="0.9"/><rect x="341.1" y="155.3" width="1.6" height="2.4" fill="#ff9a50" stroke="#ee7224" stroke-width="0.9"/><rect x="343.2" y="157.7" width="1.6" height="3.2" fill="#ff9a50" stroke="#ee7224" stroke-width="0.9"/><rect x="345.3" y="151.0" width="1.6" height="9.9" fill="#ffb070" stroke="#ee7224" stroke-width="0.9"/><rect x="347.4" y="149.4" width="1.6" height="1.6" fill="#ffb070" stroke="#ee7224" stroke-width="0.9"/><rect x="349.5" y="147.1" width="1.6" height="2.4" fill="#ffb070" stroke="#ee7224" stroke-width="0.9"/><rect x="351.6" y="147.1" width="1.6" height="5.4" fill="#ff9a50" stroke="#ee7224" stroke-width="0.9"/><rect x="353.7" y="152.4" width="1.6" height="6.4" fill="#ff9a50" stroke="#ee7224" stroke-width="0.9"/><rect x="355.8" y="153.6" width="1.6" height="5.3" fill="#ffb070" stroke="#ee7224" stroke-width="0.9"/><rect x="357.9" y="152.8" width="1.6" height="1.5" fill="#ffb070" stroke="#ee7224" stroke-width="0.9"/><rect x="360.0" y="152.8" width="1.6" height="4.9" fill="#ff9a50" stroke="#ee7224" stroke-width="0.9"/><rect x="362.1" y="140.9" width="1.6" height="16.8" fill="#ffb070" stroke="#ee7224" stroke-width="0.9"/><rect x="364.2" y="140.9" width="1.6" height="1.8" fill="#ff9a50" stroke="#ee7224" stroke-width="0.9"/><rect x="366.3" y="142.6" width="1.6" height="1.5" fill="#ff9a50" stroke="#ee7224" stroke-width="0.9"/><rect x="368.4" y="142.7" width="1.6" height="1.5" fill="#ff9a50" stroke="#ee7224" stroke-width="0.9"/><rect x="370.5" y="129.6" width="1.6" height="14.2" fill="#ffb070" stroke="#ee7224" stroke-width="0.9"/><rect x="372.6" y="129.6" width="1.6" height="10.0" fill="#ff9a50" stroke="#ee7224" stroke-width="0.9"/><rect x="374.7" y="139.6" width="1.6" height="11.9" fill="#ff9a50" stroke="#ee7224" stroke-width="0.9"/><rect x="376.8" y="144.2" width="1.6" height="7.3" fill="#ffb070" stroke="#ee7224" stroke-width="0.9"/><rect x="378.9" y="144.2" width="1.6" height="6.3" fill="#ff9a50" stroke="#ee7224" stroke-width="0.9"/><rect x="381.0" y="150.6" width="1.6" height="6.8" fill="#ff9a50" stroke="#ee7224" stroke-width="0.9"/><rect x="383.1" y="157.3" width="1.6" height="10.7" fill="#ff9a50" stroke="#ee7224" stroke-width="0.9"/><rect x="385.2" y="159.5" width="1.6" height="8.5" fill="#ffb070" stroke="#ee7224" stroke-width="0.9"/><rect x="387.3" y="159.5" width="1.6" height="1.5" fill="#ff9a50" stroke="#ee7224" stroke-width="0.9"/><rect x="389.4" y="160.5" width="1.6" height="7.6" fill="#ff9a50" stroke="#ee7224" stroke-width="0.9"/><rect x="391.5" y="168.1" width="1.6" height="7.8" fill="#ff9a50" stroke="#ee7224" stroke-width="0.9"/><rect x="393.6" y="172.0" width="1.6" height="3.9" fill="#ffb070" stroke="#ee7224" stroke-width="0.9"/><rect x="395.7" y="160.2" width="1.6" height="11.8" fill="#ffb070" stroke="#ee7224" stroke-width="0.9"/><rect x="397.8" y="160.2" width="1.6" height="1.5" fill="#ff9a50" stroke="#ee7224" stroke-width="0.9"/><rect x="399.9" y="156.0" width="1.6" height="4.5" fill="#ffb070" stroke="#ee7224" stroke-width="0.9"/><rect x="402.0" y="153.1" width="1.6" height="2.9" fill="#ffb070" stroke="#ee7224" stroke-width="0.9"/><rect x="404.1" y="153.1" width="1.6" height="7.3" fill="#ff9a50" stroke="#ee7224" stroke-width="0.9"/><rect x="406.2" y="160.4" width="1.6" height="12.2" fill="#ff9a50" stroke="#ee7224" stroke-width="0.9"/><rect x="408.3" y="172.6" width="1.6" height="2.0" fill="#ff9a50" stroke="#ee7224" stroke-width="0.9"/><rect x="410.4" y="174.6" width="1.6" height="3.2" fill="#ff9a50" stroke="#ee7224" stroke-width="0.9"/><rect x="412.5" y="177.7" width="1.6" height="8.2" fill="#ff9a50" stroke="#ee7224" stroke-width="0.9"/><rect x="414.6" y="186.0" width="1.6" height="16.3" fill="#ff9a50" stroke="#ee7224" stroke-width="0.9"/><rect x="416.7" y="199.9" width="1.6" height="2.4" fill="#ffb070" stroke="#ee7224" stroke-width="0.9"/><rect x="418.8" y="196.5" width="1.6" height="3.3" fill="#ffb070" stroke="#ee7224" stroke-width="0.9"/><rect x="420.9" y="184.8" width="1.6" height="11.7" fill="#ffb070" stroke="#ee7224" stroke-width="0.9"/><rect x="423.0" y="179.3" width="1.6" height="5.4" fill="#ffb070" stroke="#ee7224" stroke-width="0.9"/><rect x="425.1" y="179.3" width="1.6" height="29.5" fill="#ff9a50" stroke="#ee7224" stroke-width="0.9"/><rect x="427.2" y="208.9" width="1.6" height="11.4" fill="#ff9a50" stroke="#ee7224" stroke-width="0.9"/><rect x="429.3" y="220.2" width="1.6" height="3.7" fill="#ff9a50" stroke="#ee7224" stroke-width="0.9"/><rect x="431.4" y="223.9" width="1.6" height="2.8" fill="#ff9a50" stroke="#ee7224" stroke-width="0.9"/><rect x="433.5" y="226.7" width="1.6" height="1.5" fill="#ff9a50" stroke="#ee7224" stroke-width="0.9"/><rect x="435.6" y="227.1" width="1.6" height="1.5" fill="#ff9a50" stroke="#ee7224" stroke-width="0.9"/><rect x="437.7" y="213.6" width="1.6" height="13.9" fill="#ffb070" stroke="#ee7224" stroke-width="0.9"/><rect x="439.8" y="213.6" width="1.6" height="1.5" fill="#ff9a50" stroke="#ee7224" stroke-width="0.9"/><rect x="441.9" y="212.8" width="1.6" height="1.5" fill="#ffb070" stroke="#ee7224" stroke-width="0.9"/><rect x="444.0" y="191.0" width="1.6" height="21.7" fill="#ffb070" stroke="#ee7224" stroke-width="0.9"/><rect x="446.1" y="191.0" width="1.6" height="11.2" fill="#ff9a50" stroke="#ee7224" stroke-width="0.9"/><rect x="448.2" y="202.3" width="1.6" height="1.5" fill="#ff9a50" stroke="#ee7224" stroke-width="0.9"/><rect x="450.3" y="203.3" width="1.6" height="1.5" fill="#ffb070" stroke="#ee7224" stroke-width="0.9"/><rect x="452.4" y="203.3" width="1.6" height="1.5" fill="#ffb070" stroke="#ee7224" stroke-width="0.9"/><rect x="454.5" y="176.8" width="1.6" height="26.5" fill="#ffb070" stroke="#ee7224" stroke-width="0.9"/><rect x="456.6" y="176.8" width="1.6" height="10.4" fill="#ff9a50" stroke="#ee7224" stroke-width="0.9"/><rect x="458.7" y="187.1" width="1.6" height="10.3" fill="#ff9a50" stroke="#ee7224" stroke-width="0.9"/><rect x="460.8" y="197.4" width="1.6" height="6.2" fill="#ff9a50" stroke="#ee7224" stroke-width="0.9"/><rect x="462.9" y="202.0" width="1.6" height="1.6" fill="#ffb070" stroke="#ee7224" stroke-width="0.9"/><rect x="465.0" y="202.0" width="1.6" height="1.5" fill="#ff9a50" stroke="#ee7224" stroke-width="0.9"/><rect x="467.1" y="197.1" width="1.6" height="6.0" fill="#ffb070" stroke="#ee7224" stroke-width="0.9"/><rect x="469.2" y="188.1" width="1.6" height="9.0" fill="#ffb070" stroke="#ee7224" stroke-width="0.9"/><rect x="471.3" y="188.1" width="1.6" height="9.4" fill="#ff9a50" stroke="#ee7224" stroke-width="0.9"/><rect x="473.4" y="197.5" width="1.6" height="1.5" fill="#ffb070" stroke="#ee7224" stroke-width="0.9"/><rect x="475.5" y="195.3" width="1.6" height="2.2" fill="#ffb070" stroke="#ee7224" stroke-width="0.9"/><rect x="477.6" y="195.3" width="1.6" height="5.3" fill="#ff9a50" stroke="#ee7224" stroke-width="0.9"/><rect x="479.7" y="200.5" width="1.6" height="4.0" fill="#ff9a50" stroke="#ee7224" stroke-width="0.9"/><rect x="481.8" y="194.9" width="1.6" height="9.7" fill="#ffb070" stroke="#ee7224" stroke-width="0.9"/><rect x="483.9" y="194.9" width="1.6" height="4.8" fill="#ff9a50" stroke="#ee7224" stroke-width="0.9"/><rect x="486.0" y="198.2" width="1.6" height="1.5" fill="#ffb070" stroke="#ee7224" stroke-width="0.9"/><rect x="488.1" y="192.1" width="1.6" height="6.1" fill="#ffb070" stroke="#ee7224" stroke-width="0.9"/><rect x="490.2" y="188.7" width="1.6" height="3.5" fill="#ffb070" stroke="#ee7224" stroke-width="0.9"/><rect x="492.3" y="188.7" width="1.6" height="3.0" fill="#ff9a50" stroke="#ee7224" stroke-width="0.9"/><rect x="494.4" y="189.2" width="1.6" height="2.4" fill="#ffb070" stroke="#ee7224" stroke-width="0.9"/><rect x="496.5" y="185.5" width="1.6" height="3.7" fill="#ffb070" stroke="#ee7224" stroke-width="0.9"/><rect x="498.6" y="185.5" width="1.6" height="1.5" fill="#ff9a50" stroke="#ee7224" stroke-width="0.9"/><rect x="500.7" y="185.6" width="1.6" height="1.5" fill="#ffb070" stroke="#ee7224" stroke-width="0.9"/><rect x="502.8" y="185.6" width="1.6" height="4.7" fill="#ff9a50" stroke="#ee7224" stroke-width="0.9"/><rect x="504.9" y="184.3" width="1.6" height="6.0" fill="#ffb070" stroke="#ee7224" stroke-width="0.9"/><rect x="507.0" y="180.0" width="1.6" height="4.3" fill="#ffb070" stroke="#ee7224" stroke-width="0.9"/><rect x="509.1" y="173.3" width="1.6" height="6.7" fill="#ffb070" stroke="#ee7224" stroke-width="0.9"/><rect x="511.2" y="173.3" width="1.6" height="1.5" fill="#ff9a50" stroke="#ee7224" stroke-width="0.9"/><rect x="513.3" y="174.8" width="1.6" height="1.5" fill="#ff9a50" stroke="#ee7224" stroke-width="0.9"/><rect x="515.4" y="175.1" width="1.6" height="4.1" fill="#ff9a50" stroke="#ee7224" stroke-width="0.9"/><rect x="517.5" y="179.3" width="1.6" height="8.1" fill="#ff9a50" stroke="#ee7224" stroke-width="0.9"/><rect x="519.6" y="187.4" width="1.6" height="11.1" fill="#ff9a50" stroke="#ee7224" stroke-width="0.9"/><rect x="521.7" y="198.5" width="1.6" height="5.3" fill="#ff9a50" stroke="#ee7224" stroke-width="0.9"/><rect x="523.8" y="203.8" width="1.6" height="17.6" fill="#ff9a50" stroke="#ee7224" stroke-width="0.9"/><rect x="525.9" y="215.2" width="1.6" height="6.2" fill="#ffb070" stroke="#ee7224" stroke-width="0.9"/><rect x="528.0" y="204.7" width="1.6" height="10.5" fill="#ffb070" stroke="#ee7224" stroke-width="0.9"/><rect x="530.1" y="204.7" width="1.6" height="16.3" fill="#ff9a50" stroke="#ee7224" stroke-width="0.9"/><rect x="532.2" y="221.0" width="1.6" height="7.5" fill="#ff9a50" stroke="#ee7224" stroke-width="0.9"/><rect x="534.3" y="212.1" width="1.6" height="16.4" fill="#ffb070" stroke="#ee7224" stroke-width="0.9"/><rect x="536.4" y="212.1" width="1.6" height="5.3" fill="#ff9a50" stroke="#ee7224" stroke-width="0.9"/><rect x="538.5" y="217.4" width="1.6" height="11.6" fill="#ff9a50" stroke="#ee7224" stroke-width="0.9"/><rect x="540.6" y="226.8" width="1.6" height="2.2" fill="#ffb070" stroke="#ee7224" stroke-width="0.9"/><rect x="542.7" y="226.8" width="1.6" height="5.3" fill="#ff9a50" stroke="#ee7224" stroke-width="0.9"/><rect x="544.8" y="221.1" width="1.6" height="11.0" fill="#ffb070" stroke="#ee7224" stroke-width="0.9"/><rect x="546.9" y="221.1" width="1.6" height="13.4" fill="#ff9a50" stroke="#ee7224" stroke-width="0.9"/><rect x="549.0" y="234.5" width="1.6" height="7.2" fill="#ff9a50" stroke="#ee7224" stroke-width="0.9"/><rect x="551.1" y="241.7" width="1.6" height="1.5" fill="#ff9a50" stroke="#ee7224" stroke-width="0.9"/><rect x="553.2" y="242.7" width="1.6" height="1.5" fill="#ffb070" stroke="#ee7224" stroke-width="0.9"/><rect x="555.3" y="239.0" width="1.6" height="3.6" fill="#ffb070" stroke="#ee7224" stroke-width="0.9"/><rect x="557.4" y="236.7" width="1.6" height="2.3" fill="#ffb070" stroke="#ee7224" stroke-width="0.9"/><rect x="559.5" y="234.1" width="1.6" height="2.6" fill="#ffb070" stroke="#ee7224" stroke-width="0.9"/><rect x="561.6" y="234.1" width="1.6" height="8.6" fill="#ff9a50" stroke="#ee7224" stroke-width="0.9"/><rect x="563.7" y="232.6" width="1.6" height="10.1" fill="#ffb070" stroke="#ee7224" stroke-width="0.9"/><rect x="565.8" y="208.3" width="1.6" height="24.3" fill="#ffb070" stroke="#ee7224" stroke-width="0.9"/><rect x="567.9" y="208.3" width="1.6" height="14.0" fill="#ff9a50" stroke="#ee7224" stroke-width="0.9"/><rect x="570.0" y="222.3" width="1.6" height="1.5" fill="#ff9a50" stroke="#ee7224" stroke-width="0.9"/><rect x="572.1" y="212.0" width="1.6" height="11.1" fill="#ffb070" stroke="#ee7224" stroke-width="0.9"/><rect x="574.2" y="212.0" width="1.6" height="6.8" fill="#ff9a50" stroke="#ee7224" stroke-width="0.9"/><rect x="576.3" y="218.1" width="1.6" height="1.5" fill="#ffb070" stroke="#ee7224" stroke-width="0.9"/><rect x="578.4" y="197.5" width="1.6" height="20.6" fill="#ffb070" stroke="#ee7224" stroke-width="0.9"/><rect x="580.5" y="170.5" width="1.6" height="27.0" fill="#ffb070" stroke="#ee7224" stroke-width="0.9"/><rect x="582.6" y="170.5" width="1.6" height="13.1" fill="#ff9a50" stroke="#ee7224" stroke-width="0.9"/><rect x="584.7" y="183.6" width="1.6" height="3.3" fill="#ff9a50" stroke="#ee7224" stroke-width="0.9"/><rect x="586.8" y="187.0" width="1.6" height="1.6" fill="#ff9a50" stroke="#ee7224" stroke-width="0.9"/><rect x="588.9" y="188.5" width="1.6" height="1.5" fill="#ffb070" stroke="#ee7224" stroke-width="0.9"/><rect x="591.0" y="170.7" width="1.6" height="17.9" fill="#ffb070" stroke="#ee7224" stroke-width="0.9"/><rect x="593.1" y="170.7" width="1.6" height="6.9" fill="#ff9a50" stroke="#ee7224" stroke-width="0.9"/><rect x="595.2" y="165.5" width="1.6" height="12.1" fill="#ffb070" stroke="#ee7224" stroke-width="0.9"/><rect x="597.3" y="157.0" width="1.6" height="8.5" fill="#ffb070" stroke="#ee7224" stroke-width="0.9"/><rect x="599.4" y="154.3" width="1.6" height="2.7" fill="#ffb070" stroke="#ee7224" stroke-width="0.9"/><rect x="601.5" y="154.3" width="1.6" height="6.7" fill="#ff9a50" stroke="#ee7224" stroke-width="0.9"/><rect x="603.6" y="146.5" width="1.6" height="14.5" fill="#ffb070" stroke="#ee7224" stroke-width="0.9"/><rect x="605.7" y="146.5" width="1.6" height="4.3" fill="#ff9a50" stroke="#ee7224" stroke-width="0.9"/><rect x="607.8" y="150.8" width="1.6" height="8.8" fill="#ff9a50" stroke="#ee7224" stroke-width="0.9"/><rect x="609.9" y="156.3" width="1.6" height="3.4" fill="#ffb070" stroke="#ee7224" stroke-width="0.9"/><rect x="612.0" y="147.2" width="1.6" height="9.1" fill="#ffb070" stroke="#ee7224" stroke-width="0.9"/><rect x="614.1" y="140.0" width="1.6" height="7.2" fill="#ffb070" stroke="#ee7224" stroke-width="0.9"/><rect x="616.2" y="139.2" width="1.6" height="1.5" fill="#ffb070" stroke="#ee7224" stroke-width="0.9"/><rect x="618.3" y="139.2" width="1.6" height="3.5" fill="#ff9a50" stroke="#ee7224" stroke-width="0.9"/><rect x="620.4" y="142.7" width="1.6" height="18.6" fill="#ff9a50" stroke="#ee7224" stroke-width="0.9"/><rect x="622.5" y="161.4" width="1.6" height="20.8" fill="#ff9a50" stroke="#ee7224" stroke-width="0.9"/><rect x="624.6" y="180.6" width="1.6" height="1.7" fill="#ffb070" stroke="#ee7224" stroke-width="0.9"/><rect x="626.7" y="175.7" width="1.6" height="4.8" fill="#ffb070" stroke="#ee7224" stroke-width="0.9"/><rect x="628.8" y="175.7" width="1.6" height="4.0" fill="#ff9a50" stroke="#ee7224" stroke-width="0.9"/><rect x="630.9" y="174.2" width="1.6" height="5.5" fill="#ffb070" stroke="#ee7224" stroke-width="0.9"/><rect x="633.0" y="165.0" width="1.6" height="9.2" fill="#ffb070" stroke="#ee7224" stroke-width="0.9"/><rect x="635.1" y="165.0" width="1.6" height="4.2" fill="#ff9a50" stroke="#ee7224" stroke-width="0.9"/><rect x="637.2" y="157.1" width="1.6" height="12.1" fill="#ffb070" stroke="#ee7224" stroke-width="0.9"/><rect x="639.3" y="156.9" width="1.6" height="1.5" fill="#ffb070" stroke="#ee7224" stroke-width="0.9"/><rect x="641.4" y="156.9" width="1.6" height="21.8" fill="#ff9a50" stroke="#ee7224" stroke-width="0.9"/><rect x="643.5" y="178.7" width="1.6" height="10.7" fill="#ff9a50" stroke="#ee7224" stroke-width="0.9"/><rect x="645.6" y="185.5" width="1.6" height="3.9" fill="#ffb070" stroke="#ee7224" stroke-width="0.9"/><rect x="647.7" y="174.7" width="1.6" height="10.8" fill="#ffb070" stroke="#ee7224" stroke-width="0.9"/><rect x="649.8" y="171.0" width="1.6" height="3.6" fill="#ffb070" stroke="#ee7224" stroke-width="0.9"/><rect x="651.9" y="171.0" width="1.6" height="6.0" fill="#ff9a50" stroke="#ee7224" stroke-width="0.9"/><rect x="654.0" y="174.4" width="1.6" height="2.6" fill="#ffb070" stroke="#ee7224" stroke-width="0.9"/><rect x="656.1" y="174.4" width="1.6" height="1.5" fill="#ff9a50" stroke="#ee7224" stroke-width="0.9"/><rect x="658.2" y="175.0" width="1.6" height="1.5" fill="#ff9a50" stroke="#ee7224" stroke-width="0.9"/><rect x="660.3" y="175.5" width="1.6" height="5.9" fill="#ff9a50" stroke="#ee7224" stroke-width="0.9"/><rect x="662.4" y="181.4" width="1.6" height="2.1" fill="#ff9a50" stroke="#ee7224" stroke-width="0.9"/><rect x="664.5" y="182.7" width="1.6" height="1.5" fill="#ffb070" stroke="#ee7224" stroke-width="0.9"/><rect x="666.6" y="181.3" width="1.6" height="1.5" fill="#ffb070" stroke="#ee7224" stroke-width="0.9"/><rect x="668.7" y="181.3" width="1.6" height="3.0" fill="#ff9a50" stroke="#ee7224" stroke-width="0.9"/><rect x="670.8" y="175.2" width="1.6" height="9.1" fill="#ffb070" stroke="#ee7224" stroke-width="0.9"/><rect x="672.9" y="168.1" width="1.6" height="7.1" fill="#ffb070" stroke="#ee7224" stroke-width="0.9"/><rect x="675.0" y="159.2" width="1.6" height="8.9" fill="#ffb070" stroke="#ee7224" stroke-width="0.9"/><rect x="677.1" y="159.2" width="1.6" height="14.5" fill="#ff9a50" stroke="#ee7224" stroke-width="0.9"/><rect x="679.2" y="168.5" width="1.6" height="5.3" fill="#ffb070" stroke="#ee7224" stroke-width="0.9"/><rect x="681.3" y="164.3" width="1.6" height="4.2" fill="#ffb070" stroke="#ee7224" stroke-width="0.9"/><rect x="683.4" y="164.3" width="1.6" height="6.9" fill="#ff9a50" stroke="#ee7224" stroke-width="0.9"/><rect x="685.5" y="171.2" width="1.6" height="2.1" fill="#ff9a50" stroke="#ee7224" stroke-width="0.9"/><rect x="687.6" y="173.3" width="1.6" height="1.5" fill="#ff9a50" stroke="#ee7224" stroke-width="0.9"/><rect x="689.7" y="173.7" width="1.6" height="1.5" fill="#ffb070" stroke="#ee7224" stroke-width="0.9"/><rect x="691.8" y="173.7" width="1.6" height="16.6" fill="#ff9a50" stroke="#ee7224" stroke-width="0.9"/><rect x="693.9" y="182.5" width="1.6" height="7.9" fill="#ffb070" stroke="#ee7224" stroke-width="0.9"/><rect x="696.0" y="182.5" width="1.6" height="8.0" fill="#ff9a50" stroke="#ee7224" stroke-width="0.9"/><rect x="698.1" y="190.4" width="1.6" height="1.5" fill="#ff9a50" stroke="#ee7224" stroke-width="0.9"/><rect x="700.2" y="191.8" width="1.6" height="1.5" fill="#ff9a50" stroke="#ee7224" stroke-width="0.9"/><rect x="702.3" y="192.9" width="1.6" height="2.5" fill="#ff9a50" stroke="#ee7224" stroke-width="0.9"/><rect x="704.4" y="191.3" width="1.6" height="4.1" fill="#ffb070" stroke="#ee7224" stroke-width="0.9"/><rect x="706.5" y="188.4" width="1.6" height="2.9" fill="#ffb070" stroke="#ee7224" stroke-width="0.9"/><rect x="708.6" y="188.4" width="1.6" height="1.5" fill="#ff9a50" stroke="#ee7224" stroke-width="0.9"/><rect x="710.7" y="183.7" width="1.6" height="5.3" fill="#ffb070" stroke="#ee7224" stroke-width="0.9"/><rect x="712.8" y="180.3" width="1.6" height="3.4" fill="#ffb070" stroke="#ee7224" stroke-width="0.9"/><rect x="714.9" y="177.1" width="1.6" height="3.1" fill="#ffb070" stroke="#ee7224" stroke-width="0.9"/><rect x="717.0" y="172.9" width="1.6" height="4.2" fill="#ffb070" stroke="#ee7224" stroke-width="0.9"/><rect x="719.1" y="172.9" width="1.6" height="4.5" fill="#ff9a50" stroke="#ee7224" stroke-width="0.9"/><rect x="721.2" y="174.2" width="1.6" height="3.2" fill="#ffb070" stroke="#ee7224" stroke-width="0.9"/><rect x="723.3" y="174.2" width="1.6" height="1.5" fill="#ff9a50" stroke="#ee7224" stroke-width="0.9"/><rect x="725.4" y="170.2" width="1.6" height="4.7" fill="#ffb070" stroke="#ee7224" stroke-width="0.9"/><rect x="727.5" y="170.2" width="1.6" height="9.4" fill="#ff9a50" stroke="#ee7224" stroke-width="0.9"/><rect x="729.6" y="177.3" width="1.6" height="2.3" fill="#ffb070" stroke="#ee7224" stroke-width="0.9"/><rect x="731.7" y="172.3" width="1.6" height="5.0" fill="#ffb070" stroke="#ee7224" stroke-width="0.9"/><rect x="733.8" y="172.3" width="1.6" height="8.6" fill="#ff9a50" stroke="#ee7224" stroke-width="0.9"/><rect x="735.9" y="177.1" width="1.6" height="3.8" fill="#ffb070" stroke="#ee7224" stroke-width="0.9"/><rect x="738.0" y="173.4" width="1.6" height="3.8" fill="#ffb070" stroke="#ee7224" stroke-width="0.9"/><rect x="740.1" y="173.4" width="1.6" height="1.8" fill="#ff9a50" stroke="#ee7224" stroke-width="0.9"/><rect x="742.2" y="175.2" width="1.6" height="1.5" fill="#ff9a50" stroke="#ee7224" stroke-width="0.9"/><rect x="744.3" y="176.2" width="1.6" height="3.2" fill="#ff9a50" stroke="#ee7224" stroke-width="0.9"/><rect x="746.4" y="179.4" width="1.6" height="2.6" fill="#ff9a50" stroke="#ee7224" stroke-width="0.9"/><rect x="748.5" y="179.5" width="1.6" height="2.5" fill="#ffb070" stroke="#ee7224" stroke-width="0.9"/><rect x="750.6" y="178.3" width="1.6" height="1.5" fill="#ffb070" stroke="#ee7224" stroke-width="0.9"/><rect x="752.7" y="174.2" width="1.6" height="4.0" fill="#ffb070" stroke="#ee7224" stroke-width="0.9"/><rect x="754.8" y="174.2" width="1.6" height="1.8" fill="#ff9a50" stroke="#ee7224" stroke-width="0.9"/><rect x="756.9" y="176.0" width="1.6" height="6.9" fill="#ff9a50" stroke="#ee7224" stroke-width="0.9"/><rect x="759.0" y="179.3" width="1.6" height="3.6" fill="#ffb070" stroke="#ee7224" stroke-width="0.9"/><rect x="761.1" y="161.7" width="1.6" height="17.7" fill="#ffb070" stroke="#ee7224" stroke-width="0.9"/><rect x="763.2" y="161.7" width="1.6" height="1.5" fill="#ff9a50" stroke="#ee7224" stroke-width="0.9"/><rect x="765.3" y="137.1" width="1.6" height="24.7" fill="#ffb070" stroke="#ee7224" stroke-width="0.9"/><rect x="767.4" y="137.1" width="1.6" height="1.6" fill="#ff9a50" stroke="#ee7224" stroke-width="0.9"/><rect x="769.5" y="138.7" width="1.6" height="6.3" fill="#ff9a50" stroke="#ee7224" stroke-width="0.9"/><rect x="771.6" y="140.2" width="1.6" height="4.8" fill="#ffb070" stroke="#ee7224" stroke-width="0.9"/><rect x="773.7" y="136.0" width="1.6" height="4.2" fill="#ffb070" stroke="#ee7224" stroke-width="0.9"/><rect x="775.8" y="136.0" width="1.6" height="1.6" fill="#ff9a50" stroke="#ee7224" stroke-width="0.9"/><rect x="777.9" y="118.8" width="1.6" height="18.8" fill="#ffb070" stroke="#ee7224" stroke-width="0.9"/><rect x="780.0" y="115.0" width="1.6" height="3.7" fill="#ffb070" stroke="#ee7224" stroke-width="0.9"/><rect x="782.1" y="114.1" width="1.6" height="1.5" fill="#ffb070" stroke="#ee7224" stroke-width="0.9"/><rect x="784.2" y="114.1" width="1.6" height="1.5" fill="#ff9a50" stroke="#ee7224" stroke-width="0.9"/><rect x="786.3" y="113.7" width="1.6" height="1.5" fill="#ffb070" stroke="#ee7224" stroke-width="0.9"/><rect x="788.4" y="110.6" width="1.6" height="3.1" fill="#ffb070" stroke="#ee7224" stroke-width="0.9"/><rect x="790.5" y="106.2" width="1.6" height="4.4" fill="#ffb070" stroke="#ee7224" stroke-width="0.9"/><rect x="792.6" y="104.5" width="1.6" height="1.7" fill="#ffb070" stroke="#ee7224" stroke-width="0.9"/><rect x="794.7" y="104.5" width="1.6" height="1.5" fill="#ff9a50" stroke="#ee7224" stroke-width="0.9"/><rect x="796.8" y="105.2" width="1.6" height="1.5" fill="#ff9a50" stroke="#ee7224" stroke-width="0.9"/><rect x="798.9" y="98.6" width="1.6" height="6.7" fill="#ffb070" stroke="#ee7224" stroke-width="0.9"/><rect x="801.0" y="98.6" width="1.6" height="1.5" fill="#ff9a50" stroke="#ee7224" stroke-width="0.9"/><rect x="803.1" y="99.3" width="1.6" height="1.5" fill="#ff9a50" stroke="#ee7224" stroke-width="0.9"/><rect x="805.2" y="95.5" width="1.6" height="4.3" fill="#ffb070" stroke="#ee7224" stroke-width="0.9"/><rect x="807.3" y="93.6" width="1.6" height="1.9" fill="#ffb070" stroke="#ee7224" stroke-width="0.9"/><rect x="809.4" y="93.6" width="1.6" height="1.9" fill="#ff9a50" stroke="#ee7224" stroke-width="0.9"/><rect x="811.5" y="95.5" width="1.6" height="2.5" fill="#ff9a50" stroke="#ee7224" stroke-width="0.9"/><rect x="813.6" y="94.8" width="1.6" height="3.3" fill="#ffb070" stroke="#ee7224" stroke-width="0.9"/><rect x="815.7" y="94.8" width="1.6" height="2.3" fill="#ff9a50" stroke="#ee7224" stroke-width="0.9"/><rect x="817.8" y="97.0" width="1.6" height="1.5" fill="#ffb070" stroke="#ee7224" stroke-width="0.9"/>
</g>
<path d="M17.0,112.8 C21.1,113.4 34.5,113.0 41.6,116.3 C48.7,119.5 53.8,127.3 59.4,132.3 C65.0,137.3 71.0,145.9 75.4,146.5 C79.8,147.1 81.3,140.4 86.0,136.0 C90.7,131.6 97.9,124.6 103.8,120.0 C109.7,115.4 116.3,110.2 121.5,108.3 C126.7,106.3 129.8,106.7 135.0,108.3 C140.2,109.9 146.8,114.3 152.8,118.0 C158.7,121.7 164.6,126.7 170.5,130.5 C176.4,134.3 182.7,138.2 188.0,141.0 C193.3,143.8 198.0,146.9 202.5,147.4 C207.0,147.9 210.0,144.9 215.0,144.0 C220.0,143.1 225.9,141.9 232.6,142.0 C239.3,142.1 248.3,143.9 255.0,144.7 C261.7,145.4 266.8,146.8 272.8,146.5 C278.7,146.2 285.5,143.9 290.5,143.0 C295.5,142.1 298.6,140.6 303.0,141.2 C307.4,141.8 311.7,144.9 317.0,146.5 C322.3,148.1 329.1,150.2 335.0,151.0 C340.9,151.8 347.6,151.3 352.6,151.0 C357.6,150.7 361.3,149.4 365.0,149.2 C368.7,149.0 370.4,149.3 375.0,150.0 C379.6,150.7 386.8,152.3 392.8,153.6 C398.7,154.9 404.6,155.3 410.5,158.0 C416.4,160.7 422.4,165.8 428.3,169.5 C434.2,173.2 440.1,177.3 446.0,180.0 C451.9,182.7 457.9,184.0 463.8,185.5 C469.7,187.0 476.3,188.2 481.5,189.0 C486.7,189.8 489.8,190.2 495.0,190.0 C500.2,189.8 508.3,188.3 512.8,188.0 C517.2,187.7 517.2,186.7 521.6,188.0 C526.0,189.3 534.1,193.2 539.4,196.0 C544.7,198.8 549.2,202.3 553.6,205.0 C558.0,207.7 561.9,211.0 566.0,212.0 C570.1,213.0 574.6,212.4 578.4,211.2 C582.2,210.0 585.1,207.5 589.0,205.0 C592.9,202.5 597.2,199.0 601.5,196.0 C605.8,193.0 609.8,189.1 615.0,187.0 C620.2,184.9 626.8,184.4 632.8,183.4 C638.7,182.4 644.6,181.4 650.5,180.8 C656.4,180.2 662.4,180.3 668.3,180.0 C674.2,179.7 680.1,178.7 686.0,179.0 C691.9,179.3 698.5,181.0 703.8,181.7 C709.1,182.4 712.8,183.3 718.0,183.4 C723.2,183.5 729.2,182.7 735.0,182.5 C740.8,182.3 748.3,183.2 752.8,182.4 C757.2,181.7 757.2,180.5 761.6,178.0 C766.0,175.5 775.0,170.3 779.4,167.3 C783.8,164.3 785.4,162.9 788.3,160.2 C791.2,157.5 794.0,154.2 797.0,151.3 C800.0,148.4 802.4,145.3 806.0,142.5 C809.6,139.7 816.3,135.8 818.4,134.5" fill="none" stroke="#c02424" stroke-width="1.4"/>
<path d="M17.0,120.8 C18.4,120.3 22.1,118.5 25.6,118.0 C29.1,117.5 33.9,115.9 38.0,118.0 C42.1,120.1 46.7,125.2 50.5,130.5 C54.3,135.8 58.1,143.8 61.0,150.0 C63.9,156.2 65.5,163.4 68.0,167.7 C70.5,172.0 73.6,178.1 76.0,175.7 C78.4,173.3 80.8,159.3 82.5,153.5 C84.2,147.7 84.2,146.6 86.0,141.0 C87.8,135.4 90.0,126.2 93.0,120.0 C96.0,113.8 100.2,108.6 103.8,104.0 C107.4,99.4 110.9,94.6 114.4,92.4 C117.9,90.2 121.6,89.4 125.0,90.6 C128.4,91.8 131.8,96.4 135.0,99.5 C138.2,102.6 141.0,105.6 144.0,109.0 C147.0,112.4 150.1,116.1 153.0,120.0 C155.9,123.9 158.7,128.5 161.6,132.3 C164.5,136.1 167.5,139.9 170.5,143.0 C173.5,146.1 176.5,148.1 179.4,151.0 C182.3,153.9 185.1,158.4 188.0,160.6 C190.9,162.8 194.3,162.9 197.0,164.0 C199.7,165.1 201.9,168.0 204.0,167.0 C206.1,166.0 207.8,160.8 209.6,158.0 C211.4,155.2 213.3,152.5 215.0,150.5 C216.7,148.5 218.2,147.3 220.0,146.0 C221.8,144.7 223.7,143.2 226.0,142.5 C228.3,141.8 230.8,141.9 234.0,142.0 C237.2,142.1 241.5,141.9 245.0,143.0 C248.5,144.1 251.8,146.5 255.0,148.3 C258.2,150.1 261.0,153.6 264.0,153.6 C267.0,153.6 269.8,149.5 272.8,148.3 C275.7,147.1 278.6,147.8 281.6,146.5 C284.6,145.2 287.5,141.9 290.5,140.3 C293.5,138.7 297.0,136.9 299.4,136.8 C301.8,136.6 302.6,137.5 304.7,139.4 C306.8,141.3 310.0,146.5 311.8,148.3 C313.6,150.1 313.0,149.1 315.4,150.0 C317.8,150.9 322.4,153.0 326.0,153.6 C329.6,154.2 332.6,153.6 336.7,153.6 C340.8,153.6 346.2,154.0 350.9,153.6 C355.6,153.2 361.0,151.6 365.0,151.0 C369.0,150.4 371.6,149.6 375.0,150.0 C378.4,150.4 382.1,152.3 385.6,153.6 C389.2,154.9 393.1,157.3 396.3,158.0 C399.5,158.7 400.9,154.9 405.0,158.0 C409.1,161.1 415.7,170.3 421.0,176.6 C426.3,182.9 432.2,191.8 437.0,196.0 C441.8,200.2 444.0,200.6 449.6,201.5 C455.2,202.4 466.2,202.1 470.9,201.5 C475.6,200.9 475.6,198.6 478.0,198.0 C480.4,197.4 482.2,198.5 485.0,198.0 C487.8,197.5 491.8,195.9 495.0,195.0 C498.2,194.1 501.3,193.8 504.0,192.6 C506.7,191.4 508.1,188.3 511.0,188.0 C513.9,187.7 518.4,189.0 521.6,190.8 C524.9,192.6 526.9,195.4 530.5,198.8 C534.1,202.2 539.1,207.8 543.0,211.2 C546.9,214.6 550.1,216.2 553.6,219.2 C557.1,222.2 560.8,227.5 564.0,229.0 C567.2,230.5 569.7,230.8 573.0,228.0 C576.3,225.2 579.6,218.2 583.8,212.0 C588.0,205.8 593.7,197.1 598.0,190.8 C602.3,184.5 606.1,178.1 609.7,174.0 C613.3,169.9 616.8,166.5 619.5,166.0 C622.2,165.5 623.2,170.3 625.7,171.2 C628.2,172.1 631.9,171.8 634.6,171.2 C637.3,170.6 638.8,167.2 641.7,167.7 C644.7,168.2 648.8,172.7 652.3,174.0 C655.8,175.3 659.5,175.2 663.0,175.7 C666.5,176.2 670.1,177.7 673.6,177.2 C677.1,176.7 681.0,173.2 684.2,172.8 C687.4,172.4 689.7,172.8 693.0,174.6 C696.3,176.4 700.2,181.3 703.8,183.4 C707.4,185.5 710.9,187.2 714.4,187.0 C717.9,186.8 720.7,183.2 725.0,182.5 C729.3,181.8 735.4,183.2 740.0,183.0 C744.6,182.8 749.1,182.9 752.8,181.5 C756.4,180.1 758.6,177.3 761.6,174.4 C764.6,171.5 767.5,167.4 770.5,163.8 C773.5,160.2 776.4,157.1 779.4,153.0 C782.4,148.9 785.4,143.4 788.3,139.0 C791.2,134.6 794.0,129.8 797.0,126.5 C800.0,123.2 803.3,121.9 806.0,119.4 C808.7,116.9 810.9,113.3 813.0,111.4 C815.1,109.5 817.5,108.4 818.4,107.8" fill="none" stroke="#1a1ac0" stroke-width="1.3"/>
<g clip-path="url(#cmacd)">
<line x1="18.0" y1="297.5" x2="18.0" y2="295.2" stroke="#c41a1a" stroke-width="1.2"/><line x1="20.1" y1="297.5" x2="20.1" y2="295.2" stroke="#c41a1a" stroke-width="1.2"/><line x1="22.2" y1="297.5" x2="22.2" y2="295.4" stroke="#c41a1a" stroke-width="1.2"/><line x1="24.3" y1="297.5" x2="24.3" y2="296.5" stroke="#c41a1a" stroke-width="1.2"/><line x1="26.4" y1="297.5" x2="26.4" y2="297.4" stroke="#c41a1a" stroke-width="1.2"/><line x1="28.5" y1="297.5" x2="28.5" y2="297.9" stroke="#c41a1a" stroke-width="1.2"/><line x1="30.6" y1="297.5" x2="30.6" y2="298.4" stroke="#c41a1a" stroke-width="1.2"/><line x1="32.7" y1="297.5" x2="32.7" y2="298.9" stroke="#c41a1a" stroke-width="1.2"/><line x1="34.8" y1="297.5" x2="34.8" y2="299.3" stroke="#c41a1a" stroke-width="1.2"/><line x1="36.9" y1="297.5" x2="36.9" y2="299.8" stroke="#c41a1a" stroke-width="1.2"/><line x1="39.0" y1="297.5" x2="39.0" y2="300.2" stroke="#c41a1a" stroke-width="1.2"/><line x1="41.1" y1="297.5" x2="41.1" y2="300.3" stroke="#c41a1a" stroke-width="1.2"/><line x1="43.2" y1="297.5" x2="43.2" y2="300.4" stroke="#c41a1a" stroke-width="1.2"/><line x1="45.3" y1="297.5" x2="45.3" y2="300.7" stroke="#c41a1a" stroke-width="1.2"/><line x1="47.4" y1="297.5" x2="47.4" y2="301.1" stroke="#c41a1a" stroke-width="1.2"/><line x1="49.5" y1="297.5" x2="49.5" y2="301.4" stroke="#c41a1a" stroke-width="1.2"/><line x1="51.6" y1="297.5" x2="51.6" y2="301.4" stroke="#c41a1a" stroke-width="1.2"/><line x1="53.7" y1="297.5" x2="53.7" y2="302.1" stroke="#c41a1a" stroke-width="1.2"/><line x1="55.8" y1="297.5" x2="55.8" y2="302.8" stroke="#c41a1a" stroke-width="1.2"/><line x1="57.9" y1="297.5" x2="57.9" y2="303.5" stroke="#c41a1a" stroke-width="1.2"/><line x1="60.0" y1="297.5" x2="60.0" y2="304.2" stroke="#c41a1a" stroke-width="1.2"/><line x1="62.1" y1="297.5" x2="62.1" y2="304.5" stroke="#c41a1a" stroke-width="1.2"/><line x1="64.2" y1="297.5" x2="64.2" y2="304.8" stroke="#c41a1a" stroke-width="1.2"/><line x1="66.3" y1="297.5" x2="66.3" y2="305.2" stroke="#c41a1a" stroke-width="1.2"/><line x1="68.4" y1="297.5" x2="68.4" y2="305.4" stroke="#c41a1a" stroke-width="1.2"/><line x1="70.5" y1="297.5" x2="70.5" y2="304.1" stroke="#c41a1a" stroke-width="1.2"/><line x1="72.6" y1="297.5" x2="72.6" y2="302.0" stroke="#c41a1a" stroke-width="1.2"/><line x1="74.7" y1="297.5" x2="74.7" y2="299.8" stroke="#c41a1a" stroke-width="1.2"/><line x1="76.8" y1="297.5" x2="76.8" y2="297.1" stroke="#c41a1a" stroke-width="1.2"/><line x1="78.9" y1="297.5" x2="78.9" y2="291.0" stroke="#c41a1a" stroke-width="1.2"/><line x1="81.0" y1="297.5" x2="81.0" y2="286.6" stroke="#c41a1a" stroke-width="1.2"/><line x1="83.1" y1="297.5" x2="83.1" y2="284.8" stroke="#c41a1a" stroke-width="1.2"/><line x1="85.2" y1="297.5" x2="85.2" y2="286.2" stroke="#c41a1a" stroke-width="1.2"/><line x1="87.3" y1="297.5" x2="87.3" y2="288.8" stroke="#c41a1a" stroke-width="1.2"/><line x1="89.4" y1="297.5" x2="89.4" y2="289.9" stroke="#c41a1a" stroke-width="1.2"/><line x1="91.5" y1="297.5" x2="91.5" y2="289.3" stroke="#c41a1a" stroke-width="1.2"/><line x1="93.6" y1="297.5" x2="93.6" y2="288.7" stroke="#c41a1a" stroke-width="1.2"/><line x1="95.7" y1="297.5" x2="95.7" y2="289.9" stroke="#c41a1a" stroke-width="1.2"/><line x1="97.8" y1="297.5" x2="97.8" y2="291.6" stroke="#c41a1a" stroke-width="1.2"/><line x1="99.9" y1="297.5" x2="99.9" y2="293.1" stroke="#c41a1a" stroke-width="1.2"/><line x1="102.0" y1="297.5" x2="102.0" y2="293.8" stroke="#c41a1a" stroke-width="1.2"/><line x1="104.1" y1="297.5" x2="104.1" y2="294.5" stroke="#c41a1a" stroke-width="1.2"/><line x1="106.2" y1="297.5" x2="106.2" y2="294.5" stroke="#c41a1a" stroke-width="1.2"/><line x1="108.3" y1="297.5" x2="108.3" y2="294.6" stroke="#c41a1a" stroke-width="1.2"/><line x1="110.4" y1="297.5" x2="110.4" y2="296.0" stroke="#c41a1a" stroke-width="1.2"/><line x1="112.5" y1="297.5" x2="112.5" y2="297.4" stroke="#c41a1a" stroke-width="1.2"/><line x1="114.6" y1="297.5" x2="114.6" y2="298.6" stroke="#c41a1a" stroke-width="1.2"/><line x1="116.7" y1="297.5" x2="116.7" y2="299.7" stroke="#c41a1a" stroke-width="1.2"/><line x1="118.8" y1="297.5" x2="118.8" y2="300.5" stroke="#c41a1a" stroke-width="1.2"/><line x1="120.9" y1="297.5" x2="120.9" y2="301.3" stroke="#c41a1a" stroke-width="1.2"/><line x1="123.0" y1="297.5" x2="123.0" y2="301.9" stroke="#c41a1a" stroke-width="1.2"/><line x1="125.1" y1="297.5" x2="125.1" y2="302.4" stroke="#c41a1a" stroke-width="1.2"/><line x1="127.2" y1="297.5" x2="127.2" y2="302.8" stroke="#c41a1a" stroke-width="1.2"/><line x1="129.3" y1="297.5" x2="129.3" y2="303.3" stroke="#c41a1a" stroke-width="1.2"/><line x1="131.4" y1="297.5" x2="131.4" y2="303.8" stroke="#c41a1a" stroke-width="1.2"/><line x1="133.5" y1="297.5" x2="133.5" y2="304.3" stroke="#c41a1a" stroke-width="1.2"/><line x1="135.6" y1="297.5" x2="135.6" y2="304.5" stroke="#c41a1a" stroke-width="1.2"/><line x1="137.7" y1="297.5" x2="137.7" y2="304.3" stroke="#c41a1a" stroke-width="1.2"/><line x1="139.8" y1="297.5" x2="139.8" y2="304.0" stroke="#c41a1a" stroke-width="1.2"/><line x1="141.9" y1="297.5" x2="141.9" y2="303.8" stroke="#c41a1a" stroke-width="1.2"/><line x1="144.0" y1="297.5" x2="144.0" y2="303.3" stroke="#c41a1a" stroke-width="1.2"/><line x1="146.1" y1="297.5" x2="146.1" y2="302.9" stroke="#c41a1a" stroke-width="1.2"/><line x1="148.2" y1="297.5" x2="148.2" y2="302.5" stroke="#c41a1a" stroke-width="1.2"/><line x1="150.3" y1="297.5" x2="150.3" y2="302.0" stroke="#c41a1a" stroke-width="1.2"/><line x1="152.4" y1="297.5" x2="152.4" y2="301.5" stroke="#c41a1a" stroke-width="1.2"/><line x1="154.5" y1="297.5" x2="154.5" y2="301.4" stroke="#c41a1a" stroke-width="1.2"/><line x1="156.6" y1="297.5" x2="156.6" y2="301.2" stroke="#c41a1a" stroke-width="1.2"/><line x1="158.7" y1="297.5" x2="158.7" y2="301.2" stroke="#c41a1a" stroke-width="1.2"/><line x1="160.8" y1="297.5" x2="160.8" y2="301.2" stroke="#c41a1a" stroke-width="1.2"/><line x1="162.9" y1="297.5" x2="162.9" y2="301.2" stroke="#c41a1a" stroke-width="1.2"/><line x1="165.0" y1="297.5" x2="165.0" y2="301.4" stroke="#c41a1a" stroke-width="1.2"/><line x1="167.1" y1="297.5" x2="167.1" y2="301.7" stroke="#c41a1a" stroke-width="1.2"/><line x1="169.2" y1="297.5" x2="169.2" y2="301.9" stroke="#c41a1a" stroke-width="1.2"/><line x1="171.3" y1="297.5" x2="171.3" y2="301.3" stroke="#c41a1a" stroke-width="1.2"/><line x1="173.4" y1="297.5" x2="173.4" y2="300.6" stroke="#c41a1a" stroke-width="1.2"/><line x1="175.5" y1="297.5" x2="175.5" y2="300.3" stroke="#c41a1a" stroke-width="1.2"/><line x1="177.6" y1="297.5" x2="177.6" y2="300.1" stroke="#c41a1a" stroke-width="1.2"/><line x1="179.7" y1="297.5" x2="179.7" y2="299.4" stroke="#c41a1a" stroke-width="1.2"/><line x1="181.8" y1="297.5" x2="181.8" y2="298.7" stroke="#c41a1a" stroke-width="1.2"/><line x1="183.9" y1="297.5" x2="183.9" y2="298.1" stroke="#c41a1a" stroke-width="1.2"/><line x1="186.0" y1="297.5" x2="186.0" y2="297.5" stroke="#c41a1a" stroke-width="1.2"/><line x1="188.1" y1="297.5" x2="188.1" y2="297.5" stroke="#c41a1a" stroke-width="1.2"/><line x1="190.2" y1="297.5" x2="190.2" y2="297.4" stroke="#c41a1a" stroke-width="1.2"/><line x1="192.3" y1="297.5" x2="192.3" y2="297.4" stroke="#c41a1a" stroke-width="1.2"/><line x1="194.4" y1="297.5" x2="194.4" y2="297.4" stroke="#c41a1a" stroke-width="1.2"/><line x1="196.5" y1="297.5" x2="196.5" y2="297.2" stroke="#c41a1a" stroke-width="1.2"/><line x1="198.6" y1="297.5" x2="198.6" y2="296.7" stroke="#c41a1a" stroke-width="1.2"/><line x1="200.7" y1="297.5" x2="200.7" y2="296.2" stroke="#c41a1a" stroke-width="1.2"/><line x1="202.8" y1="297.5" x2="202.8" y2="295.8" stroke="#c41a1a" stroke-width="1.2"/><line x1="204.9" y1="297.5" x2="204.9" y2="295.3" stroke="#c41a1a" stroke-width="1.2"/><line x1="207.0" y1="297.5" x2="207.0" y2="294.2" stroke="#c41a1a" stroke-width="1.2"/><line x1="209.1" y1="297.5" x2="209.1" y2="293.0" stroke="#c41a1a" stroke-width="1.2"/><line x1="211.2" y1="297.5" x2="211.2" y2="292.6" stroke="#c41a1a" stroke-width="1.2"/><line x1="213.3" y1="297.5" x2="213.3" y2="292.5" stroke="#c41a1a" stroke-width="1.2"/><line x1="215.4" y1="297.5" x2="215.4" y2="292.6" stroke="#c41a1a" stroke-width="1.2"/><line x1="217.5" y1="297.5" x2="217.5" y2="293.0" stroke="#c41a1a" stroke-width="1.2"/><line x1="219.6" y1="297.5" x2="219.6" y2="293.3" stroke="#c41a1a" stroke-width="1.2"/><line x1="221.7" y1="297.5" x2="221.7" y2="294.3" stroke="#c41a1a" stroke-width="1.2"/><line x1="223.8" y1="297.5" x2="223.8" y2="294.8" stroke="#c41a1a" stroke-width="1.2"/><line x1="225.9" y1="297.5" x2="225.9" y2="295.4" stroke="#c41a1a" stroke-width="1.2"/><line x1="228.0" y1="297.5" x2="228.0" y2="296.2" stroke="#c41a1a" stroke-width="1.2"/><line x1="230.1" y1="297.5" x2="230.1" y2="297.1" stroke="#c41a1a" stroke-width="1.2"/><line x1="232.2" y1="297.5" x2="232.2" y2="297.8" stroke="#c41a1a" stroke-width="1.2"/><line x1="234.3" y1="297.5" x2="234.3" y2="298.5" stroke="#c41a1a" stroke-width="1.2"/><line x1="236.4" y1="297.5" x2="236.4" y2="299.1" stroke="#c41a1a" stroke-width="1.2"/><line x1="238.5" y1="297.5" x2="238.5" y2="299.8" stroke="#c41a1a" stroke-width="1.2"/><line x1="240.6" y1="297.5" x2="240.6" y2="300.0" stroke="#c41a1a" stroke-width="1.2"/><line x1="242.7" y1="297.5" x2="242.7" y2="300.2" stroke="#c41a1a" stroke-width="1.2"/><line x1="244.8" y1="297.5" x2="244.8" y2="300.3" stroke="#c41a1a" stroke-width="1.2"/><line x1="246.9" y1="297.5" x2="246.9" y2="300.7" stroke="#c41a1a" stroke-width="1.2"/><line x1="249.0" y1="297.5" x2="249.0" y2="301.1" stroke="#c41a1a" stroke-width="1.2"/><line x1="251.1" y1="297.5" x2="251.1" y2="301.3" stroke="#c41a1a" stroke-width="1.2"/><line x1="253.2" y1="297.5" x2="253.2" y2="301.5" stroke="#c41a1a" stroke-width="1.2"/><line x1="255.3" y1="297.5" x2="255.3" y2="301.2" stroke="#c41a1a" stroke-width="1.2"/><line x1="257.4" y1="297.5" x2="257.4" y2="300.9" stroke="#c41a1a" stroke-width="1.2"/><line x1="259.5" y1="297.5" x2="259.5" y2="300.9" stroke="#c41a1a" stroke-width="1.2"/><line x1="261.6" y1="297.5" x2="261.6" y2="300.8" stroke="#c41a1a" stroke-width="1.2"/><line x1="263.7" y1="297.5" x2="263.7" y2="300.2" stroke="#c41a1a" stroke-width="1.2"/><line x1="265.8" y1="297.5" x2="265.8" y2="299.4" stroke="#c41a1a" stroke-width="1.2"/><line x1="267.9" y1="297.5" x2="267.9" y2="299.1" stroke="#c41a1a" stroke-width="1.2"/><line x1="270.0" y1="297.5" x2="270.0" y2="298.7" stroke="#c41a1a" stroke-width="1.2"/><line x1="272.1" y1="297.5" x2="272.1" y2="298.4" stroke="#c41a1a" stroke-width="1.2"/><line x1="274.2" y1="297.5" x2="274.2" y2="298.1" stroke="#c41a1a" stroke-width="1.2"/><line x1="276.3" y1="297.5" x2="276.3" y2="298.2" stroke="#c41a1a" stroke-width="1.2"/><line x1="278.4" y1="297.5" x2="278.4" y2="298.2" stroke="#c41a1a" stroke-width="1.2"/><line x1="280.5" y1="297.5" x2="280.5" y2="298.2" stroke="#c41a1a" stroke-width="1.2"/><line x1="282.6" y1="297.5" x2="282.6" y2="298.1" stroke="#c41a1a" stroke-width="1.2"/><line x1="284.7" y1="297.5" x2="284.7" y2="297.7" stroke="#c41a1a" stroke-width="1.2"/><line x1="286.8" y1="297.5" x2="286.8" y2="297.3" stroke="#c41a1a" stroke-width="1.2"/><line x1="288.9" y1="297.5" x2="288.9" y2="297.0" stroke="#c41a1a" stroke-width="1.2"/><line x1="291.0" y1="297.5" x2="291.0" y2="296.6" stroke="#c41a1a" stroke-width="1.2"/><line x1="293.1" y1="297.5" x2="293.1" y2="296.1" stroke="#c41a1a" stroke-width="1.2"/><line x1="295.2" y1="297.5" x2="295.2" y2="296.2" stroke="#c41a1a" stroke-width="1.2"/><line x1="297.3" y1="297.5" x2="297.3" y2="296.2" stroke="#c41a1a" stroke-width="1.2"/><line x1="299.4" y1="297.5" x2="299.4" y2="296.4" stroke="#c41a1a" stroke-width="1.2"/><line x1="301.5" y1="297.5" x2="301.5" y2="296.9" stroke="#c41a1a" stroke-width="1.2"/><line x1="303.6" y1="297.5" x2="303.6" y2="297.4" stroke="#c41a1a" stroke-width="1.2"/><line x1="305.7" y1="297.5" x2="305.7" y2="298.6" stroke="#c41a1a" stroke-width="1.2"/><line x1="307.8" y1="297.5" x2="307.8" y2="300.1" stroke="#c41a1a" stroke-width="1.2"/><line x1="309.9" y1="297.5" x2="309.9" y2="301.6" stroke="#c41a1a" stroke-width="1.2"/><line x1="312.0" y1="297.5" x2="312.0" y2="301.5" stroke="#c41a1a" stroke-width="1.2"/><line x1="314.1" y1="297.5" x2="314.1" y2="301.8" stroke="#c41a1a" stroke-width="1.2"/><line x1="316.2" y1="297.5" x2="316.2" y2="301.2" stroke="#c41a1a" stroke-width="1.2"/><line x1="318.3" y1="297.5" x2="318.3" y2="300.3" stroke="#c41a1a" stroke-width="1.2"/><line x1="320.4" y1="297.5" x2="320.4" y2="299.2" stroke="#c41a1a" stroke-width="1.2"/><line x1="322.5" y1="297.5" x2="322.5" y2="298.4" stroke="#c41a1a" stroke-width="1.2"/><line x1="324.6" y1="297.5" x2="324.6" y2="298.0" stroke="#c41a1a" stroke-width="1.2"/><line x1="326.7" y1="297.5" x2="326.7" y2="297.8" stroke="#c41a1a" stroke-width="1.2"/><line x1="328.8" y1="297.5" x2="328.8" y2="297.7" stroke="#c41a1a" stroke-width="1.2"/><line x1="330.9" y1="297.5" x2="330.9" y2="297.5" stroke="#c41a1a" stroke-width="1.2"/><line x1="333.0" y1="297.5" x2="333.0" y2="297.4" stroke="#c41a1a" stroke-width="1.2"/><line x1="335.1" y1="297.5" x2="335.1" y2="297.4" stroke="#c41a1a" stroke-width="1.2"/><line x1="337.2" y1="297.5" x2="337.2" y2="297.5" stroke="#c41a1a" stroke-width="1.2"/><line x1="339.3" y1="297.5" x2="339.3" y2="297.5" stroke="#c41a1a" stroke-width="1.2"/><line x1="341.4" y1="297.5" x2="341.4" y2="297.6" stroke="#c41a1a" stroke-width="1.2"/><line x1="343.5" y1="297.5" x2="343.5" y2="297.7" stroke="#c41a1a" stroke-width="1.2"/><line x1="345.6" y1="297.5" x2="345.6" y2="297.6" stroke="#c41a1a" stroke-width="1.2"/><line x1="347.7" y1="297.5" x2="347.7" y2="297.4" stroke="#c41a1a" stroke-width="1.2"/><line x1="349.8" y1="297.5" x2="349.8" y2="297.3" stroke="#c41a1a" stroke-width="1.2"/><line x1="351.9" y1="297.5" x2="351.9" y2="297.1" stroke="#c41a1a" stroke-width="1.2"/><line x1="354.0" y1="297.5" x2="354.0" y2="296.9" stroke="#c41a1a" stroke-width="1.2"/><line x1="356.1" y1="297.5" x2="356.1" y2="296.7" stroke="#c41a1a" stroke-width="1.2"/><line x1="358.2" y1="297.5" x2="358.2" y2="296.7" stroke="#c41a1a" stroke-width="1.2"/><line x1="360.3" y1="297.5" x2="360.3" y2="296.7" stroke="#c41a1a" stroke-width="1.2"/><line x1="362.4" y1="297.5" x2="362.4" y2="296.7" stroke="#c41a1a" stroke-width="1.2"/><line x1="364.5" y1="297.5" x2="364.5" y2="296.7" stroke="#c41a1a" stroke-width="1.2"/><line x1="366.6" y1="297.5" x2="366.6" y2="296.9" stroke="#c41a1a" stroke-width="1.2"/><line x1="368.7" y1="297.5" x2="368.7" y2="297.8" stroke="#c41a1a" stroke-width="1.2"/><line x1="370.8" y1="297.5" x2="370.8" y2="298.6" stroke="#c41a1a" stroke-width="1.2"/><line x1="372.9" y1="297.5" x2="372.9" y2="298.9" stroke="#c41a1a" stroke-width="1.2"/><line x1="375.0" y1="297.5" x2="375.0" y2="299.0" stroke="#c41a1a" stroke-width="1.2"/><line x1="377.1" y1="297.5" x2="377.1" y2="299.2" stroke="#c41a1a" stroke-width="1.2"/><line x1="379.2" y1="297.5" x2="379.2" y2="299.6" stroke="#c41a1a" stroke-width="1.2"/><line x1="381.3" y1="297.5" x2="381.3" y2="299.9" stroke="#c41a1a" stroke-width="1.2"/><line x1="383.4" y1="297.5" x2="383.4" y2="300.0" stroke="#c41a1a" stroke-width="1.2"/><line x1="385.5" y1="297.5" x2="385.5" y2="300.2" stroke="#c41a1a" stroke-width="1.2"/><line x1="387.6" y1="297.5" x2="387.6" y2="300.3" stroke="#c41a1a" stroke-width="1.2"/><line x1="389.7" y1="297.5" x2="389.7" y2="300.2" stroke="#c41a1a" stroke-width="1.2"/><line x1="391.8" y1="297.5" x2="391.8" y2="300.2" stroke="#c41a1a" stroke-width="1.2"/><line x1="393.9" y1="297.5" x2="393.9" y2="300.3" stroke="#c41a1a" stroke-width="1.2"/><line x1="396.0" y1="297.5" x2="396.0" y2="300.2" stroke="#c41a1a" stroke-width="1.2"/><line x1="398.1" y1="297.5" x2="398.1" y2="300.0" stroke="#c41a1a" stroke-width="1.2"/><line x1="400.2" y1="297.5" x2="400.2" y2="299.9" stroke="#c41a1a" stroke-width="1.2"/><line x1="402.3" y1="297.5" x2="402.3" y2="299.7" stroke="#c41a1a" stroke-width="1.2"/><line x1="404.4" y1="297.5" x2="404.4" y2="299.5" stroke="#c41a1a" stroke-width="1.2"/><line x1="406.5" y1="297.5" x2="406.5" y2="299.4" stroke="#c41a1a" stroke-width="1.2"/><line x1="408.6" y1="297.5" x2="408.6" y2="299.2" stroke="#c41a1a" stroke-width="1.2"/><line x1="410.7" y1="297.5" x2="410.7" y2="299.6" stroke="#c41a1a" stroke-width="1.2"/><line x1="412.8" y1="297.5" x2="412.8" y2="300.0" stroke="#c41a1a" stroke-width="1.2"/><line x1="414.9" y1="297.5" x2="414.9" y2="300.4" stroke="#c41a1a" stroke-width="1.2"/><line x1="417.0" y1="297.5" x2="417.0" y2="300.8" stroke="#c41a1a" stroke-width="1.2"/><line x1="419.1" y1="297.5" x2="419.1" y2="300.7" stroke="#c41a1a" stroke-width="1.2"/><line x1="421.2" y1="297.5" x2="421.2" y2="300.4" stroke="#c41a1a" stroke-width="1.2"/><line x1="423.3" y1="297.5" x2="423.3" y2="300.0" stroke="#c41a1a" stroke-width="1.2"/><line x1="425.4" y1="297.5" x2="425.4" y2="299.7" stroke="#c41a1a" stroke-width="1.2"/><line x1="427.5" y1="297.5" x2="427.5" y2="299.4" stroke="#c41a1a" stroke-width="1.2"/><line x1="429.6" y1="297.5" x2="429.6" y2="299.3" stroke="#c41a1a" stroke-width="1.2"/><line x1="431.7" y1="297.5" x2="431.7" y2="299.7" stroke="#c41a1a" stroke-width="1.2"/><line x1="433.8" y1="297.5" x2="433.8" y2="300.0" stroke="#c41a1a" stroke-width="1.2"/><line x1="435.9" y1="297.5" x2="435.9" y2="300.4" stroke="#c41a1a" stroke-width="1.2"/><line x1="438.0" y1="297.5" x2="438.0" y2="299.6" stroke="#c41a1a" stroke-width="1.2"/><line x1="440.1" y1="297.5" x2="440.1" y2="298.0" stroke="#c41a1a" stroke-width="1.2"/><line x1="442.2" y1="297.5" x2="442.2" y2="297.5" stroke="#c41a1a" stroke-width="1.2"/><line x1="444.3" y1="297.5" x2="444.3" y2="297.0" stroke="#c41a1a" stroke-width="1.2"/><line x1="446.4" y1="297.5" x2="446.4" y2="296.5" stroke="#c41a1a" stroke-width="1.2"/><line x1="448.5" y1="297.5" x2="448.5" y2="296.0" stroke="#c41a1a" stroke-width="1.2"/><line x1="450.6" y1="297.5" x2="450.6" y2="295.5" stroke="#c41a1a" stroke-width="1.2"/><line x1="452.7" y1="297.5" x2="452.7" y2="295.2" stroke="#c41a1a" stroke-width="1.2"/><line x1="454.8" y1="297.5" x2="454.8" y2="295.0" stroke="#c41a1a" stroke-width="1.2"/><line x1="456.9" y1="297.5" x2="456.9" y2="294.8" stroke="#c41a1a" stroke-width="1.2"/><line x1="459.0" y1="297.5" x2="459.0" y2="294.7" stroke="#c41a1a" stroke-width="1.2"/><line x1="461.1" y1="297.5" x2="461.1" y2="294.7" stroke="#c41a1a" stroke-width="1.2"/><line x1="463.2" y1="297.5" x2="463.2" y2="294.7" stroke="#c41a1a" stroke-width="1.2"/><line x1="465.3" y1="297.5" x2="465.3" y2="294.8" stroke="#c41a1a" stroke-width="1.2"/><line x1="467.4" y1="297.5" x2="467.4" y2="294.9" stroke="#c41a1a" stroke-width="1.2"/><line x1="469.5" y1="297.5" x2="469.5" y2="295.1" stroke="#c41a1a" stroke-width="1.2"/><line x1="471.6" y1="297.5" x2="471.6" y2="295.2" stroke="#c41a1a" stroke-width="1.2"/><line x1="473.7" y1="297.5" x2="473.7" y2="295.3" stroke="#c41a1a" stroke-width="1.2"/><line x1="475.8" y1="297.5" x2="475.8" y2="295.4" stroke="#c41a1a" stroke-width="1.2"/><line x1="477.9" y1="297.5" x2="477.9" y2="295.5" stroke="#c41a1a" stroke-width="1.2"/><line x1="480.0" y1="297.5" x2="480.0" y2="295.6" stroke="#c41a1a" stroke-width="1.2"/><line x1="482.1" y1="297.5" x2="482.1" y2="295.7" stroke="#c41a1a" stroke-width="1.2"/><line x1="484.2" y1="297.5" x2="484.2" y2="295.8" stroke="#c41a1a" stroke-width="1.2"/><line x1="486.3" y1="297.5" x2="486.3" y2="295.9" stroke="#c41a1a" stroke-width="1.2"/><line x1="488.4" y1="297.5" x2="488.4" y2="296.1" stroke="#c41a1a" stroke-width="1.2"/><line x1="490.5" y1="297.5" x2="490.5" y2="296.2" stroke="#c41a1a" stroke-width="1.2"/><line x1="492.6" y1="297.5" x2="492.6" y2="296.5" stroke="#c41a1a" stroke-width="1.2"/><line x1="494.7" y1="297.5" x2="494.7" y2="296.9" stroke="#c41a1a" stroke-width="1.2"/><line x1="496.8" y1="297.5" x2="496.8" y2="297.2" stroke="#c41a1a" stroke-width="1.2"/><line x1="498.9" y1="297.5" x2="498.9" y2="297.3" stroke="#c41a1a" stroke-width="1.2"/><line x1="501.0" y1="297.5" x2="501.0" y2="297.5" stroke="#c41a1a" stroke-width="1.2"/><line x1="503.1" y1="297.5" x2="503.1" y2="297.7" stroke="#c41a1a" stroke-width="1.2"/><line x1="505.2" y1="297.5" x2="505.2" y2="297.9" stroke="#c41a1a" stroke-width="1.2"/><line x1="507.3" y1="297.5" x2="507.3" y2="298.1" stroke="#c41a1a" stroke-width="1.2"/><line x1="509.4" y1="297.5" x2="509.4" y2="298.6" stroke="#c41a1a" stroke-width="1.2"/><line x1="511.5" y1="297.5" x2="511.5" y2="299.1" stroke="#c41a1a" stroke-width="1.2"/><line x1="513.6" y1="297.5" x2="513.6" y2="299.6" stroke="#c41a1a" stroke-width="1.2"/><line x1="515.7" y1="297.5" x2="515.7" y2="300.1" stroke="#c41a1a" stroke-width="1.2"/><line x1="517.8" y1="297.5" x2="517.8" y2="300.2" stroke="#c41a1a" stroke-width="1.2"/><line x1="519.9" y1="297.5" x2="519.9" y2="299.9" stroke="#c41a1a" stroke-width="1.2"/><line x1="522.0" y1="297.5" x2="522.0" y2="299.6" stroke="#c41a1a" stroke-width="1.2"/><line x1="524.1" y1="297.5" x2="524.1" y2="299.4" stroke="#c41a1a" stroke-width="1.2"/><line x1="526.2" y1="297.5" x2="526.2" y2="299.5" stroke="#c41a1a" stroke-width="1.2"/><line x1="528.3" y1="297.5" x2="528.3" y2="299.8" stroke="#c41a1a" stroke-width="1.2"/><line x1="530.4" y1="297.5" x2="530.4" y2="300.1" stroke="#c41a1a" stroke-width="1.2"/><line x1="532.5" y1="297.5" x2="532.5" y2="300.3" stroke="#c41a1a" stroke-width="1.2"/><line x1="534.6" y1="297.5" x2="534.6" y2="300.6" stroke="#c41a1a" stroke-width="1.2"/><line x1="536.7" y1="297.5" x2="536.7" y2="300.8" stroke="#c41a1a" stroke-width="1.2"/><line x1="538.8" y1="297.5" x2="538.8" y2="301.0" stroke="#c41a1a" stroke-width="1.2"/><line x1="540.9" y1="297.5" x2="540.9" y2="300.7" stroke="#c41a1a" stroke-width="1.2"/><line x1="543.0" y1="297.5" x2="543.0" y2="300.5" stroke="#c41a1a" stroke-width="1.2"/><line x1="545.1" y1="297.5" x2="545.1" y2="300.2" stroke="#c41a1a" stroke-width="1.2"/><line x1="547.2" y1="297.5" x2="547.2" y2="300.0" stroke="#c41a1a" stroke-width="1.2"/><line x1="549.3" y1="297.5" x2="549.3" y2="300.1" stroke="#c41a1a" stroke-width="1.2"/><line x1="551.4" y1="297.5" x2="551.4" y2="300.1" stroke="#c41a1a" stroke-width="1.2"/><line x1="553.5" y1="297.5" x2="553.5" y2="300.2" stroke="#c41a1a" stroke-width="1.2"/><line x1="555.6" y1="297.5" x2="555.6" y2="300.2" stroke="#c41a1a" stroke-width="1.2"/><line x1="557.7" y1="297.5" x2="557.7" y2="300.2" stroke="#c41a1a" stroke-width="1.2"/><line x1="559.8" y1="297.5" x2="559.8" y2="300.2" stroke="#c41a1a" stroke-width="1.2"/><line x1="561.9" y1="297.5" x2="561.9" y2="299.5" stroke="#c41a1a" stroke-width="1.2"/><line x1="564.0" y1="297.5" x2="564.0" y2="298.8" stroke="#c41a1a" stroke-width="1.2"/><line x1="566.1" y1="297.5" x2="566.1" y2="298.0" stroke="#c41a1a" stroke-width="1.2"/><line x1="568.2" y1="297.5" x2="568.2" y2="297.2" stroke="#c41a1a" stroke-width="1.2"/><line x1="570.3" y1="297.5" x2="570.3" y2="296.5" stroke="#c41a1a" stroke-width="1.2"/><line x1="572.4" y1="297.5" x2="572.4" y2="296.0" stroke="#c41a1a" stroke-width="1.2"/><line x1="574.5" y1="297.5" x2="574.5" y2="295.6" stroke="#c41a1a" stroke-width="1.2"/><line x1="576.6" y1="297.5" x2="576.6" y2="295.2" stroke="#c41a1a" stroke-width="1.2"/><line x1="578.7" y1="297.5" x2="578.7" y2="294.2" stroke="#c41a1a" stroke-width="1.2"/><line x1="580.8" y1="297.5" x2="580.8" y2="293.4" stroke="#c41a1a" stroke-width="1.2"/><line x1="582.9" y1="297.5" x2="582.9" y2="292.6" stroke="#c41a1a" stroke-width="1.2"/><line x1="585.0" y1="297.5" x2="585.0" y2="291.8" stroke="#c41a1a" stroke-width="1.2"/><line x1="587.1" y1="297.5" x2="587.1" y2="291.8" stroke="#c41a1a" stroke-width="1.2"/><line x1="589.2" y1="297.5" x2="589.2" y2="292.2" stroke="#c41a1a" stroke-width="1.2"/><line x1="591.3" y1="297.5" x2="591.3" y2="292.5" stroke="#c41a1a" stroke-width="1.2"/><line x1="593.4" y1="297.5" x2="593.4" y2="292.8" stroke="#c41a1a" stroke-width="1.2"/><line x1="595.5" y1="297.5" x2="595.5" y2="293.5" stroke="#c41a1a" stroke-width="1.2"/><line x1="597.6" y1="297.5" x2="597.6" y2="294.1" stroke="#c41a1a" stroke-width="1.2"/><line x1="599.7" y1="297.5" x2="599.7" y2="294.4" stroke="#c41a1a" stroke-width="1.2"/><line x1="601.8" y1="297.5" x2="601.8" y2="294.7" stroke="#c41a1a" stroke-width="1.2"/><line x1="603.9" y1="297.5" x2="603.9" y2="295.0" stroke="#c41a1a" stroke-width="1.2"/><line x1="606.0" y1="297.5" x2="606.0" y2="295.6" stroke="#c41a1a" stroke-width="1.2"/><line x1="608.1" y1="297.5" x2="608.1" y2="296.1" stroke="#c41a1a" stroke-width="1.2"/><line x1="610.2" y1="297.5" x2="610.2" y2="296.5" stroke="#c41a1a" stroke-width="1.2"/><line x1="612.3" y1="297.5" x2="612.3" y2="296.8" stroke="#c41a1a" stroke-width="1.2"/><line x1="614.4" y1="297.5" x2="614.4" y2="297.2" stroke="#c41a1a" stroke-width="1.2"/><line x1="616.5" y1="297.5" x2="616.5" y2="297.6" stroke="#c41a1a" stroke-width="1.2"/><line x1="618.6" y1="297.5" x2="618.6" y2="298.9" stroke="#c41a1a" stroke-width="1.2"/><line x1="620.7" y1="297.5" x2="620.7" y2="300.3" stroke="#c41a1a" stroke-width="1.2"/><line x1="622.8" y1="297.5" x2="622.8" y2="302.2" stroke="#c41a1a" stroke-width="1.2"/><line x1="624.9" y1="297.5" x2="624.9" y2="303.2" stroke="#c41a1a" stroke-width="1.2"/><line x1="627.0" y1="297.5" x2="627.0" y2="304.1" stroke="#c41a1a" stroke-width="1.2"/><line x1="629.1" y1="297.5" x2="629.1" y2="303.2" stroke="#c41a1a" stroke-width="1.2"/><line x1="631.2" y1="297.5" x2="631.2" y2="302.4" stroke="#c41a1a" stroke-width="1.2"/><line x1="633.3" y1="297.5" x2="633.3" y2="301.7" stroke="#c41a1a" stroke-width="1.2"/><line x1="635.4" y1="297.5" x2="635.4" y2="301.4" stroke="#c41a1a" stroke-width="1.2"/><line x1="637.5" y1="297.5" x2="637.5" y2="301.2" stroke="#c41a1a" stroke-width="1.2"/><line x1="639.6" y1="297.5" x2="639.6" y2="301.0" stroke="#c41a1a" stroke-width="1.2"/><line x1="641.7" y1="297.5" x2="641.7" y2="300.8" stroke="#c41a1a" stroke-width="1.2"/><line x1="643.8" y1="297.5" x2="643.8" y2="300.5" stroke="#c41a1a" stroke-width="1.2"/><line x1="645.9" y1="297.5" x2="645.9" y2="300.3" stroke="#c41a1a" stroke-width="1.2"/><line x1="648.0" y1="297.5" x2="648.0" y2="300.1" stroke="#c41a1a" stroke-width="1.2"/><line x1="650.1" y1="297.5" x2="650.1" y2="299.9" stroke="#c41a1a" stroke-width="1.2"/><line x1="652.2" y1="297.5" x2="652.2" y2="299.5" stroke="#c41a1a" stroke-width="1.2"/><line x1="654.3" y1="297.5" x2="654.3" y2="299.2" stroke="#c41a1a" stroke-width="1.2"/><line x1="656.4" y1="297.5" x2="656.4" y2="299.4" stroke="#c41a1a" stroke-width="1.2"/><line x1="658.5" y1="297.5" x2="658.5" y2="299.6" stroke="#c41a1a" stroke-width="1.2"/><line x1="660.6" y1="297.5" x2="660.6" y2="299.8" stroke="#c41a1a" stroke-width="1.2"/><line x1="662.7" y1="297.5" x2="662.7" y2="299.9" stroke="#c41a1a" stroke-width="1.2"/><line x1="664.8" y1="297.5" x2="664.8" y2="299.9" stroke="#c41a1a" stroke-width="1.2"/><line x1="666.9" y1="297.5" x2="666.9" y2="299.7" stroke="#c41a1a" stroke-width="1.2"/><line x1="669.0" y1="297.5" x2="669.0" y2="299.5" stroke="#c41a1a" stroke-width="1.2"/><line x1="671.1" y1="297.5" x2="671.1" y2="299.3" stroke="#c41a1a" stroke-width="1.2"/><line x1="673.2" y1="297.5" x2="673.2" y2="299.1" stroke="#c41a1a" stroke-width="1.2"/><line x1="675.3" y1="297.5" x2="675.3" y2="299.0" stroke="#c41a1a" stroke-width="1.2"/><line x1="677.4" y1="297.5" x2="677.4" y2="299.0" stroke="#c41a1a" stroke-width="1.2"/><line x1="679.5" y1="297.5" x2="679.5" y2="299.0" stroke="#c41a1a" stroke-width="1.2"/><line x1="681.6" y1="297.5" x2="681.6" y2="299.0" stroke="#c41a1a" stroke-width="1.2"/><line x1="683.7" y1="297.5" x2="683.7" y2="299.0" stroke="#c41a1a" stroke-width="1.2"/><line x1="685.8" y1="297.5" x2="685.8" y2="299.1" stroke="#c41a1a" stroke-width="1.2"/><line x1="687.9" y1="297.5" x2="687.9" y2="299.2" stroke="#c41a1a" stroke-width="1.2"/><line x1="690.0" y1="297.5" x2="690.0" y2="299.4" stroke="#c41a1a" stroke-width="1.2"/><line x1="692.1" y1="297.5" x2="692.1" y2="299.6" stroke="#c41a1a" stroke-width="1.2"/><line x1="694.2" y1="297.5" x2="694.2" y2="299.7" stroke="#c41a1a" stroke-width="1.2"/><line x1="696.3" y1="297.5" x2="696.3" y2="299.9" stroke="#c41a1a" stroke-width="1.2"/><line x1="698.4" y1="297.5" x2="698.4" y2="300.2" stroke="#c41a1a" stroke-width="1.2"/><line x1="700.5" y1="297.5" x2="700.5" y2="300.4" stroke="#c41a1a" stroke-width="1.2"/><line x1="702.6" y1="297.5" x2="702.6" y2="300.7" stroke="#c41a1a" stroke-width="1.2"/><line x1="704.7" y1="297.5" x2="704.7" y2="300.8" stroke="#c41a1a" stroke-width="1.2"/><line x1="706.8" y1="297.5" x2="706.8" y2="300.8" stroke="#c41a1a" stroke-width="1.2"/><line x1="708.9" y1="297.5" x2="708.9" y2="300.2" stroke="#c41a1a" stroke-width="1.2"/><line x1="711.0" y1="297.5" x2="711.0" y2="299.7" stroke="#c41a1a" stroke-width="1.2"/><line x1="713.1" y1="297.5" x2="713.1" y2="298.7" stroke="#c41a1a" stroke-width="1.2"/><line x1="715.2" y1="297.5" x2="715.2" y2="297.3" stroke="#c41a1a" stroke-width="1.2"/><line x1="717.3" y1="297.5" x2="717.3" y2="297.1" stroke="#c41a1a" stroke-width="1.2"/><line x1="719.4" y1="297.5" x2="719.4" y2="296.8" stroke="#c41a1a" stroke-width="1.2"/><line x1="721.5" y1="297.5" x2="721.5" y2="296.6" stroke="#c41a1a" stroke-width="1.2"/><line x1="723.6" y1="297.5" x2="723.6" y2="296.6" stroke="#c41a1a" stroke-width="1.2"/><line x1="725.7" y1="297.5" x2="725.7" y2="297.2" stroke="#c41a1a" stroke-width="1.2"/><line x1="727.8" y1="297.5" x2="727.8" y2="297.6" stroke="#c41a1a" stroke-width="1.2"/><line x1="729.9" y1="297.5" x2="729.9" y2="297.8" stroke="#c41a1a" stroke-width="1.2"/><line x1="732.0" y1="297.5" x2="732.0" y2="298.1" stroke="#c41a1a" stroke-width="1.2"/><line x1="734.1" y1="297.5" x2="734.1" y2="298.4" stroke="#c41a1a" stroke-width="1.2"/><line x1="736.2" y1="297.5" x2="736.2" y2="298.6" stroke="#c41a1a" stroke-width="1.2"/><line x1="738.3" y1="297.5" x2="738.3" y2="298.8" stroke="#c41a1a" stroke-width="1.2"/><line x1="740.4" y1="297.5" x2="740.4" y2="298.8" stroke="#c41a1a" stroke-width="1.2"/><line x1="742.5" y1="297.5" x2="742.5" y2="298.7" stroke="#c41a1a" stroke-width="1.2"/><line x1="744.6" y1="297.5" x2="744.6" y2="298.7" stroke="#c41a1a" stroke-width="1.2"/><line x1="746.7" y1="297.5" x2="746.7" y2="298.6" stroke="#c41a1a" stroke-width="1.2"/><line x1="748.8" y1="297.5" x2="748.8" y2="298.2" stroke="#c41a1a" stroke-width="1.2"/><line x1="750.9" y1="297.5" x2="750.9" y2="296.9" stroke="#c41a1a" stroke-width="1.2"/><line x1="753.0" y1="297.5" x2="753.0" y2="295.4" stroke="#c41a1a" stroke-width="1.2"/><line x1="755.1" y1="297.5" x2="755.1" y2="294.8" stroke="#c41a1a" stroke-width="1.2"/><line x1="757.2" y1="297.5" x2="757.2" y2="294.5" stroke="#c41a1a" stroke-width="1.2"/><line x1="759.3" y1="297.5" x2="759.3" y2="294.2" stroke="#c41a1a" stroke-width="1.2"/><line x1="761.4" y1="297.5" x2="761.4" y2="293.8" stroke="#c41a1a" stroke-width="1.2"/><line x1="763.5" y1="297.5" x2="763.5" y2="293.6" stroke="#c41a1a" stroke-width="1.2"/><line x1="765.6" y1="297.5" x2="765.6" y2="293.6" stroke="#c41a1a" stroke-width="1.2"/><line x1="767.7" y1="297.5" x2="767.7" y2="293.6" stroke="#c41a1a" stroke-width="1.2"/><line x1="769.8" y1="297.5" x2="769.8" y2="294.0" stroke="#c41a1a" stroke-width="1.2"/><line x1="771.9" y1="297.5" x2="771.9" y2="294.5" stroke="#c41a1a" stroke-width="1.2"/><line x1="774.0" y1="297.5" x2="774.0" y2="295.1" stroke="#c41a1a" stroke-width="1.2"/><line x1="776.1" y1="297.5" x2="776.1" y2="295.3" stroke="#c41a1a" stroke-width="1.2"/><line x1="778.2" y1="297.5" x2="778.2" y2="295.6" stroke="#c41a1a" stroke-width="1.2"/><line x1="780.3" y1="297.5" x2="780.3" y2="295.8" stroke="#c41a1a" stroke-width="1.2"/><line x1="782.4" y1="297.5" x2="782.4" y2="296.1" stroke="#c41a1a" stroke-width="1.2"/><line x1="784.5" y1="297.5" x2="784.5" y2="296.3" stroke="#c41a1a" stroke-width="1.2"/><line x1="786.6" y1="297.5" x2="786.6" y2="296.5" stroke="#c41a1a" stroke-width="1.2"/><line x1="788.7" y1="297.5" x2="788.7" y2="296.6" stroke="#c41a1a" stroke-width="1.2"/><line x1="790.8" y1="297.5" x2="790.8" y2="296.6" stroke="#c41a1a" stroke-width="1.2"/><line x1="792.9" y1="297.5" x2="792.9" y2="296.7" stroke="#c41a1a" stroke-width="1.2"/><line x1="795.0" y1="297.5" x2="795.0" y2="296.8" stroke="#c41a1a" stroke-width="1.2"/><line x1="797.1" y1="297.5" x2="797.1" y2="297.0" stroke="#c41a1a" stroke-width="1.2"/><line x1="799.2" y1="297.5" x2="799.2" y2="297.4" stroke="#c41a1a" stroke-width="1.2"/><line x1="801.3" y1="297.5" x2="801.3" y2="297.9" stroke="#c41a1a" stroke-width="1.2"/><line x1="803.4" y1="297.5" x2="803.4" y2="298.3" stroke="#c41a1a" stroke-width="1.2"/><line x1="805.5" y1="297.5" x2="805.5" y2="298.8" stroke="#c41a1a" stroke-width="1.2"/><line x1="807.6" y1="297.5" x2="807.6" y2="299.2" stroke="#c41a1a" stroke-width="1.2"/><line x1="809.7" y1="297.5" x2="809.7" y2="299.4" stroke="#c41a1a" stroke-width="1.2"/><line x1="811.8" y1="297.5" x2="811.8" y2="299.5" stroke="#c41a1a" stroke-width="1.2"/><line x1="813.9" y1="297.5" x2="813.9" y2="299.7" stroke="#c41a1a" stroke-width="1.2"/><line x1="816.0" y1="297.5" x2="816.0" y2="299.5" stroke="#c41a1a" stroke-width="1.2"/><line x1="818.1" y1="297.5" x2="818.1" y2="299.1" stroke="#c41a1a" stroke-width="1.2"/>
<line x1="18" y1="297.5" x2="820" y2="297.5" stroke="#c82020" stroke-dasharray="1 1" opacity="0.8"/>
<path d="M17.3,295.4 C18.1,295.2 19.0,294.0 21.8,294.3 C24.6,294.6 30.8,296.4 34.2,297.1 C37.6,297.9 39.3,297.8 42.1,298.8 C44.9,299.8 48.1,301.2 51.1,303.3 C54.1,305.4 57.1,308.8 60.1,311.2 C63.1,313.6 66.5,317.2 69.2,318.0 C71.9,318.8 74.3,318.2 76.0,315.8 C77.7,313.4 78.0,307.5 79.3,303.3 C80.6,299.1 82.3,293.8 83.8,290.9 C85.3,288.0 86.7,287.6 88.4,285.9 C90.1,284.2 92.1,281.9 94.0,280.8 C95.9,279.7 97.1,279.8 99.6,279.1 C102.0,278.4 105.9,276.4 108.7,276.8 C111.5,277.2 113.8,279.1 116.6,281.3 C119.4,283.5 122.6,287.1 125.6,289.8 C128.6,292.5 131.9,295.7 134.6,297.7 C137.3,299.7 139.5,300.6 141.8,301.7 C144.1,302.8 145.9,303.5 148.5,304.5 C151.1,305.5 154.2,306.5 157.6,307.9 C161.0,309.3 165.7,312.1 168.9,312.9 C172.1,313.7 174.0,313.4 176.8,312.9 C179.6,312.4 182.6,310.9 185.8,310.1 C189.0,309.4 192.8,309.3 196.0,308.4 C199.2,307.5 202.8,306.2 205.0,304.5 C207.2,302.8 208.0,300.0 209.5,298.3 C211.0,296.6 212.3,295.4 214.0,294.3 C215.7,293.2 217.3,292.1 219.6,291.5 C221.9,290.9 224.8,290.5 227.6,290.9 C230.4,291.3 233.6,292.9 236.6,293.8 C239.6,294.8 242.8,295.5 245.6,296.6 C248.4,297.7 250.7,299.6 253.5,300.5 C256.3,301.4 259.8,302.3 262.5,302.2 C265.2,302.1 266.9,300.9 270.0,300.0 C273.1,299.1 277.1,298.2 281.0,297.0 C284.9,295.8 290.2,293.4 293.2,292.6 C296.2,291.8 296.9,291.8 298.9,292.0 C300.9,292.2 303.1,292.6 305.0,294.0 C306.9,295.4 308.4,299.0 310.0,300.5 C311.6,302.0 313.2,302.5 314.7,302.8 C316.2,303.1 317.6,302.5 319.2,302.2 C320.8,301.9 319.7,301.4 324.0,301.0 C328.3,300.6 337.9,300.4 345.0,299.5 C352.1,298.6 361.4,295.8 366.6,295.4 C371.8,295.0 372.6,296.1 376.0,297.0 C379.4,297.9 383.7,299.6 386.9,300.5 C390.1,301.4 391.4,302.1 395.0,302.2 C398.6,302.3 404.7,300.4 408.5,301.1 C412.3,301.8 414.2,305.0 417.6,306.2 C421.0,307.4 425.7,307.5 428.9,308.4 C432.1,309.3 433.1,312.4 436.8,311.8 C440.6,311.2 447.8,306.1 451.4,304.5 C455.0,302.9 454.4,303.2 458.2,302.2 C462.0,301.2 468.7,299.3 474.0,298.3 C479.3,297.3 484.4,296.6 490.0,296.0 C495.6,295.4 503.0,294.7 507.9,295.0 C512.8,295.3 516.4,296.9 519.2,297.7 C522.1,298.4 521.7,298.2 525.0,299.5 C528.3,300.8 534.8,304.0 539.0,305.3 C543.2,306.6 546.5,306.9 550.0,307.5 C553.5,308.1 556.6,309.6 560.0,309.0 C563.4,308.4 567.4,305.9 570.4,304.2 C573.4,302.5 575.1,301.6 577.7,299.0 C580.3,296.4 583.2,291.0 586.0,288.6 C588.8,286.2 591.3,285.4 594.4,284.4 C597.5,283.3 601.2,282.6 604.8,282.3 C608.4,282.0 613.6,281.8 616.2,282.3 C618.9,282.8 618.7,283.8 620.4,285.5 C622.1,287.2 624.6,291.3 626.7,292.8 C628.8,294.2 630.2,294.0 633.0,294.3 C635.8,294.6 640.4,294.4 643.3,294.8 C646.2,295.2 647.8,296.4 650.6,297.0 C653.4,297.6 656.0,298.0 660.0,298.5 C664.0,299.0 670.4,299.9 674.6,300.0 C678.8,300.1 681.6,299.1 685.0,299.0 C688.4,298.9 691.5,298.8 695.0,299.4 C698.5,300.0 703.5,302.2 706.3,302.8 C709.1,303.4 709.1,303.6 711.9,302.8 C714.7,302.1 717.2,299.2 723.2,298.3 C729.2,297.4 741.8,298.7 748.0,297.7 C754.2,296.7 757.1,293.7 760.5,292.1 C763.9,290.5 764.3,289.4 768.4,288.1 C772.5,286.8 780.6,285.2 785.3,284.2 C790.0,283.2 791.7,281.8 796.6,281.9 C801.5,282.0 810.5,284.2 814.6,284.7 C818.7,285.2 819.9,284.7 821.0,284.7" fill="none" stroke="#0e0e66" stroke-width="1.1"/>
<path d="M17.3,297.7 C18.8,297.3 22.6,295.8 26.3,295.4 C30.1,295.0 36.0,294.9 39.8,295.4 C43.6,295.9 45.5,296.8 48.9,298.3 C52.3,299.8 57.0,302.7 60.1,304.5 C63.2,306.3 65.2,307.4 67.7,309.0 C70.2,310.6 73.1,314.4 75.4,314.4 C77.7,314.4 79.4,312.5 81.6,309.0 C83.8,305.5 86.3,296.4 88.4,293.2 C90.5,290.0 92.1,291.3 94.0,289.7 C95.9,288.1 97.9,285.1 99.6,283.6 C101.3,282.2 102.1,281.8 104.0,281.0 C105.9,280.2 108.8,279.4 110.9,279.1 C113.0,278.8 114.8,278.6 116.6,279.1 C118.4,279.6 119.8,280.8 121.7,282.0 C123.6,283.2 125.4,284.7 127.9,286.4 C130.4,288.1 134.6,290.6 136.9,292.1 C139.2,293.6 139.3,293.8 141.8,295.4 C144.3,297.0 148.3,299.8 151.9,301.7 C155.5,303.6 159.4,305.3 163.2,306.7 C167.0,308.1 170.7,309.5 174.5,310.1 C178.3,310.7 182.0,310.4 185.8,310.1 C189.6,309.8 193.9,309.0 197.1,308.4 C200.3,307.8 202.2,308.2 205.0,306.7 C207.8,305.2 211.4,301.4 214.0,299.4 C216.6,297.4 218.4,296.1 220.8,294.9 C223.2,293.7 225.7,292.6 228.7,292.1 C231.7,291.6 235.6,291.7 238.8,292.1 C242.0,292.5 244.9,293.4 247.9,294.3 C250.9,295.2 254.0,296.9 256.9,297.7 C259.8,298.5 262.1,299.3 265.0,299.4 C267.9,299.5 271.2,298.9 274.0,298.3 C276.8,297.7 279.1,296.7 281.9,296.0 C284.7,295.3 288.2,294.8 291.0,294.3 C293.8,293.8 296.5,293.3 298.9,293.2 C301.3,293.1 303.4,293.1 305.6,293.8 C307.9,294.6 309.8,296.6 312.4,297.7 C315.0,298.8 318.0,300.0 321.4,300.5 C324.8,301.0 328.9,300.7 332.7,300.5 C336.5,300.3 340.2,299.8 344.0,299.4 C347.8,299.0 351.9,298.8 355.3,298.3 C358.7,297.8 361.7,297.2 364.3,296.6 C366.9,296.0 368.5,295.0 371.1,294.9 C373.7,294.8 377.1,295.4 380.1,296.0 C383.1,296.6 386.7,297.7 389.2,298.3 C391.7,298.9 391.8,299.2 395.0,299.4 C398.2,299.6 404.7,298.8 408.5,299.4 C412.3,300.0 414.2,301.6 417.6,302.8 C421.0,304.0 425.1,305.6 428.9,306.7 C432.6,307.8 436.4,309.6 440.1,309.6 C443.9,309.6 447.6,307.6 451.4,306.7 C455.2,305.8 458.9,304.9 462.7,303.9 C466.5,302.9 470.2,301.4 474.0,300.5 C477.8,299.6 481.5,299.1 485.3,298.3 C489.1,297.6 492.8,296.7 496.6,296.0 C500.4,295.3 504.5,294.6 507.9,294.3 C511.3,294.0 514.0,293.7 516.9,294.3 C519.8,294.9 522.0,296.7 525.0,297.7 C528.0,298.7 531.6,299.4 535.2,300.5 C538.8,301.6 542.6,303.4 546.7,304.4 C550.8,305.4 556.0,306.2 560.0,306.3 C564.0,306.4 567.3,306.1 570.4,305.2 C573.5,304.4 576.0,302.9 578.8,301.0 C581.5,299.1 584.0,296.1 587.0,293.8 C590.0,291.6 593.2,289.1 596.5,287.5 C599.8,285.9 603.6,284.8 606.9,283.9 C610.2,283.0 613.6,282.4 616.2,282.3 C618.9,282.2 619.7,282.1 622.5,283.4 C625.3,284.7 629.5,288.7 633.0,290.1 C636.5,291.5 639.8,290.7 643.3,291.7 C646.8,292.7 650.3,295.1 653.8,295.9 C657.2,296.7 660.5,296.0 664.0,296.4 C667.5,296.8 671.1,298.3 674.6,298.5 C678.1,298.7 681.6,297.7 685.0,297.5 C688.4,297.3 691.8,296.9 695.0,297.1 C698.2,297.3 700.6,298.0 704.0,298.8 C707.4,299.6 711.5,301.8 715.3,301.7 C719.1,301.6 722.8,299.1 726.6,298.3 C730.4,297.5 734.1,296.9 737.9,296.6 C741.7,296.3 746.6,296.4 749.2,296.6 C751.8,296.8 751.5,298.0 753.7,297.7 C756.0,297.4 759.3,296.3 762.7,294.9 C766.1,293.5 770.2,290.8 774.0,289.2 C777.8,287.6 781.5,286.4 785.3,285.3 C789.1,284.2 792.8,283.1 796.6,282.5 C800.4,281.9 804.9,281.9 807.9,281.9 C810.9,281.9 812.4,282.2 814.6,282.5 C816.9,282.8 820.3,283.4 821.4,283.6" fill="none" stroke="#f41818" stroke-width="3" stroke-linecap="round"/>
<path d="M17.3,297.7 C18.8,297.3 22.6,295.8 26.3,295.4 C30.1,295.0 36.0,294.9 39.8,295.4 C43.6,295.9 45.5,296.8 48.9,298.3 C52.3,299.8 57.0,302.7 60.1,304.5 C63.2,306.3 65.2,307.4 67.7,309.0 C70.2,310.6 73.1,314.4 75.4,314.4 C77.7,314.4 79.4,312.5 81.6,309.0 C83.8,305.5 86.3,296.4 88.4,293.2 C90.5,290.0 92.1,291.3 94.0,289.7 C95.9,288.1 97.9,285.1 99.6,283.6 C101.3,282.2 102.1,281.8 104.0,281.0 C105.9,280.2 108.8,279.4 110.9,279.1 C113.0,278.8 114.8,278.6 116.6,279.1 C118.4,279.6 119.8,280.8 121.7,282.0 C123.6,283.2 125.4,284.7 127.9,286.4 C130.4,288.1 134.6,290.6 136.9,292.1 C139.2,293.6 139.3,293.8 141.8,295.4 C144.3,297.0 148.3,299.8 151.9,301.7 C155.5,303.6 159.4,305.3 163.2,306.7 C167.0,308.1 170.7,309.5 174.5,310.1 C178.3,310.7 182.0,310.4 185.8,310.1 C189.6,309.8 193.9,309.0 197.1,308.4 C200.3,307.8 202.2,308.2 205.0,306.7 C207.8,305.2 211.4,301.4 214.0,299.4 C216.6,297.4 218.4,296.1 220.8,294.9 C223.2,293.7 225.7,292.6 228.7,292.1 C231.7,291.6 235.6,291.7 238.8,292.1 C242.0,292.5 244.9,293.4 247.9,294.3 C250.9,295.2 254.0,296.9 256.9,297.7 C259.8,298.5 262.1,299.3 265.0,299.4 C267.9,299.5 271.2,298.9 274.0,298.3 C276.8,297.7 279.1,296.7 281.9,296.0 C284.7,295.3 288.2,294.8 291.0,294.3 C293.8,293.8 296.5,293.3 298.9,293.2 C301.3,293.1 303.4,293.1 305.6,293.8 C307.9,294.6 309.8,296.6 312.4,297.7 C315.0,298.8 318.0,300.0 321.4,300.5 C324.8,301.0 328.9,300.7 332.7,300.5 C336.5,300.3 340.2,299.8 344.0,299.4 C347.8,299.0 351.9,298.8 355.3,298.3 C358.7,297.8 361.7,297.2 364.3,296.6 C366.9,296.0 368.5,295.0 371.1,294.9 C373.7,294.8 377.1,295.4 380.1,296.0 C383.1,296.6 386.7,297.7 389.2,298.3 C391.7,298.9 391.8,299.2 395.0,299.4 C398.2,299.6 404.7,298.8 408.5,299.4 C412.3,300.0 414.2,301.6 417.6,302.8 C421.0,304.0 425.1,305.6 428.9,306.7 C432.6,307.8 436.4,309.6 440.1,309.6 C443.9,309.6 447.6,307.6 451.4,306.7 C455.2,305.8 458.9,304.9 462.7,303.9 C466.5,302.9 470.2,301.4 474.0,300.5 C477.8,299.6 481.5,299.1 485.3,298.3 C489.1,297.6 492.8,296.7 496.6,296.0 C500.4,295.3 504.5,294.6 507.9,294.3 C511.3,294.0 514.0,293.7 516.9,294.3 C519.8,294.9 522.0,296.7 525.0,297.7 C528.0,298.7 531.6,299.4 535.2,300.5 C538.8,301.6 542.6,303.4 546.7,304.4 C550.8,305.4 556.0,306.2 560.0,306.3 C564.0,306.4 567.3,306.1 570.4,305.2 C573.5,304.4 576.0,302.9 578.8,301.0 C581.5,299.1 584.0,296.1 587.0,293.8 C590.0,291.6 593.2,289.1 596.5,287.5 C599.8,285.9 603.6,284.8 606.9,283.9 C610.2,283.0 613.6,282.4 616.2,282.3 C618.9,282.2 619.7,282.1 622.5,283.4 C625.3,284.7 629.5,288.7 633.0,290.1 C636.5,291.5 639.8,290.7 643.3,291.7 C646.8,292.7 650.3,295.1 653.8,295.9 C657.2,296.7 660.5,296.0 664.0,296.4 C667.5,296.8 671.1,298.3 674.6,298.5 C678.1,298.7 681.6,297.7 685.0,297.5 C688.4,297.3 691.8,296.9 695.0,297.1 C698.2,297.3 700.6,298.0 704.0,298.8 C707.4,299.6 711.5,301.8 715.3,301.7 C719.1,301.6 722.8,299.1 726.6,298.3 C730.4,297.5 734.1,296.9 737.9,296.6 C741.7,296.3 746.6,296.4 749.2,296.6 C751.8,296.8 751.5,298.0 753.7,297.7 C756.0,297.4 759.3,296.3 762.7,294.9 C766.1,293.5 770.2,290.8 774.0,289.2 C777.8,287.6 781.5,286.4 785.3,285.3 C789.1,284.2 792.8,283.1 796.6,282.5 C800.4,281.9 804.9,281.9 807.9,281.9 C810.9,281.9 812.4,282.2 814.6,282.5 C816.9,282.8 820.3,283.4 821.4,283.6" fill="none" stroke="#ff7070" stroke-width="1" stroke-dasharray="1 1.5"/>
</g>
<line x1="18" y1="343" x2="818" y2="343" stroke="#1c1ca8" stroke-width="1.7"/>
<line x1="18" y1="394.6" x2="818" y2="394.6" stroke="#1c1ca8" stroke-width="1.7"/>
<g clip-path="url(#below70)"><polyline points="17.9,361.2 22.6,363.0 26.5,369.7 29.3,376.4 34.0,366.0 38.9,356.4 40.8,377.4 44.6,372.6 45.6,379.3 50.0,376.0 55.0,384.0 60.0,380.0 65.0,392.0 70.4,398.4 76.5,378.2 77.7,355.8 78.5,345.8 80.4,340.4 82.7,345.0 84.3,351.2 86.6,355.4 88.9,353.5 92.4,349.3 95.0,352.4 98.1,355.4 99.7,354.3 101.6,349.3 104.7,348.5 105.9,349.7 107.4,353.5 109.3,355.0 111.3,359.3 113.6,356.2 115.9,357.4 118.2,362.8 120.5,365.1 122.8,370.9 124.4,370.5 126.3,365.5 128.2,371.3 130.6,379.8 133.6,377.0 134.4,377.4 139.3,386.5 141.1,368.3 143.5,376.8 149.0,379.3 152.7,384.1 157.5,385.3 161.2,389.0 166.6,393.8 168.5,396.9 170.9,390.2 174.0,391.4 179.4,379.3 183.0,387.2 185.5,383.5 190.3,385.3 193.4,384.1 197.6,380.5 200.0,385.9 203.1,381.7 204.9,385.3 205.5,362.2 207.3,350.1 209.8,348.3 212.2,352.5 214.6,363.5 218.9,353.1 221.9,361.6 223.7,359.2 228.0,362.2 232.9,363.5 236.5,367.1 240.2,371.4 246.2,372.0 250.5,387.2 254.7,373.8 262.0,385.3 265.1,367.1 266.3,370.1 268.7,361.0 270.0,359.2 272.4,361.0 275.5,363.5 278.5,367.7 281.5,361.0 284.6,365.9 288.2,362.2 291.3,352.5 293.1,353.1 294.9,359.2 298.0,360.4 301.0,362.2 303.4,373.2 307.1,390.8 309.5,386.5 311.9,385.9 316.2,378.0 318.6,376.8 322.3,368.9 325.9,375.6 328.9,366.5 332.0,375.0 335.6,373.2 339.3,373.8 342.9,368.9 347.2,366.5 350.8,369.5 354.5,368.9 357.5,359.8 360.5,365.9 363.6,357.4 366.6,348.9 369.0,355.0 371.5,367.1 373.9,378.0 378.2,374.4 380.6,373.2 383.6,375.6 386.7,373.8 389.7,373.2 392.7,386.5 395.2,370.7 398.8,369.5 402.5,367.1 406.1,373.2 408.5,384.1 412.3,384.1 415.3,390.8 418.3,393.2 422.0,379.9 425.6,385.3 429.3,391.4 431.7,393.2 433.5,389.0 437.2,382.9 440.8,373.2 444.5,380.5 446.9,376.8 451.1,373.8 456.0,364.7 459.0,372.6 462.1,376.2 465.1,372.0 468.8,373.2 473.0,359.8 476.0,367.1 480.3,372.6 484.6,367.1 489.4,364.7 493.1,362.2 497.3,359.2 499.7,362.8 501.6,375.6 502.8,367.1 505.8,354.3 508.9,356.8 511.9,365.3 514.9,365.9 518.6,373.8 521.6,372.6 524.7,384.1 528.3,392.6 530.7,378.6 533.8,384.7 538.0,378.0 542.8,375.6 544.6,375.0 547.0,376.8 552.0,385.0 558.0,382.0 563.0,386.0 566.5,378.0 567.1,365.9 568.9,361.6 571.3,370.7 574.4,367.1 576.8,356.2 581.0,346.4 583.5,345.2 587.7,345.2 589.5,342.8 592.0,348.9 595.0,344.6 598.0,344.0 599.9,340.4 601.7,347.1 604.1,345.8 607.8,345.8 611.4,344.0 613.2,342.8 615.1,348.9 618.1,355.0 620.5,365.9 623.0,378.0 626.0,377.4 628.4,367.1 632.1,365.9 634.5,366.5 638.2,359.2 640.6,362.8 643.0,358.6 644.8,376.8 648.5,372.6 654.0,374.4 659.4,366.5 663.7,372.6 666.7,372.6 668.0,376.8 672.9,374.4 674.7,359.2 677.7,356.8 680.2,359.2 682.6,366.5 686.2,367.1 688.7,373.8 692.3,369.5 694.7,384.1 699.0,380.5 701.4,387.8 704.5,383.5 707.5,376.8 709.3,379.3 713.0,375.0 716.6,367.7 720.3,362.2 722.7,359.2 726.9,366.5 731.2,363.5 737.3,367.1 741.5,364.7 744.6,371.4 747.6,379.9 749.4,373.8 753.7,365.9 756.1,357.4 757.9,345.2 760.4,341.0 764.0,336.7 767.6,335.5 770.1,340.4 772.5,346.4 774.3,339.2 778.6,334.3 782.2,331.9 784.7,331.3 786.5,337.9 788.3,334.3 795.6,329.4 799.2,334.3 802.3,337.3 804.1,345.2 806.5,341.0 808.5,340.0 812.5,351.6 815.0,348.0 818.2,345.9" fill="none" stroke="#f29434" stroke-width="1" shape-rendering="crispEdges"/></g>
<g clip-path="url(#above70)"><polyline points="17.9,361.2 22.6,363.0 26.5,369.7 29.3,376.4 34.0,366.0 38.9,356.4 40.8,377.4 44.6,372.6 45.6,379.3 50.0,376.0 55.0,384.0 60.0,380.0 65.0,392.0 70.4,398.4 76.5,378.2 77.7,355.8 78.5,345.8 80.4,340.4 82.7,345.0 84.3,351.2 86.6,355.4 88.9,353.5 92.4,349.3 95.0,352.4 98.1,355.4 99.7,354.3 101.6,349.3 104.7,348.5 105.9,349.7 107.4,353.5 109.3,355.0 111.3,359.3 113.6,356.2 115.9,357.4 118.2,362.8 120.5,365.1 122.8,370.9 124.4,370.5 126.3,365.5 128.2,371.3 130.6,379.8 133.6,377.0 134.4,377.4 139.3,386.5 141.1,368.3 143.5,376.8 149.0,379.3 152.7,384.1 157.5,385.3 161.2,389.0 166.6,393.8 168.5,396.9 170.9,390.2 174.0,391.4 179.4,379.3 183.0,387.2 185.5,383.5 190.3,385.3 193.4,384.1 197.6,380.5 200.0,385.9 203.1,381.7 204.9,385.3 205.5,362.2 207.3,350.1 209.8,348.3 212.2,352.5 214.6,363.5 218.9,353.1 221.9,361.6 223.7,359.2 228.0,362.2 232.9,363.5 236.5,367.1 240.2,371.4 246.2,372.0 250.5,387.2 254.7,373.8 262.0,385.3 265.1,367.1 266.3,370.1 268.7,361.0 270.0,359.2 272.4,361.0 275.5,363.5 278.5,367.7 281.5,361.0 284.6,365.9 288.2,362.2 291.3,352.5 293.1,353.1 294.9,359.2 298.0,360.4 301.0,362.2 303.4,373.2 307.1,390.8 309.5,386.5 311.9,385.9 316.2,378.0 318.6,376.8 322.3,368.9 325.9,375.6 328.9,366.5 332.0,375.0 335.6,373.2 339.3,373.8 342.9,368.9 347.2,366.5 350.8,369.5 354.5,368.9 357.5,359.8 360.5,365.9 363.6,357.4 366.6,348.9 369.0,355.0 371.5,367.1 373.9,378.0 378.2,374.4 380.6,373.2 383.6,375.6 386.7,373.8 389.7,373.2 392.7,386.5 395.2,370.7 398.8,369.5 402.5,367.1 406.1,373.2 408.5,384.1 412.3,384.1 415.3,390.8 418.3,393.2 422.0,379.9 425.6,385.3 429.3,391.4 431.7,393.2 433.5,389.0 437.2,382.9 440.8,373.2 444.5,380.5 446.9,376.8 451.1,373.8 456.0,364.7 459.0,372.6 462.1,376.2 465.1,372.0 468.8,373.2 473.0,359.8 476.0,367.1 480.3,372.6 484.6,367.1 489.4,364.7 493.1,362.2 497.3,359.2 499.7,362.8 501.6,375.6 502.8,367.1 505.8,354.3 508.9,356.8 511.9,365.3 514.9,365.9 518.6,373.8 521.6,372.6 524.7,384.1 528.3,392.6 530.7,378.6 533.8,384.7 538.0,378.0 542.8,375.6 544.6,375.0 547.0,376.8 552.0,385.0 558.0,382.0 563.0,386.0 566.5,378.0 567.1,365.9 568.9,361.6 571.3,370.7 574.4,367.1 576.8,356.2 581.0,346.4 583.5,345.2 587.7,345.2 589.5,342.8 592.0,348.9 595.0,344.6 598.0,344.0 599.9,340.4 601.7,347.1 604.1,345.8 607.8,345.8 611.4,344.0 613.2,342.8 615.1,348.9 618.1,355.0 620.5,365.9 623.0,378.0 626.0,377.4 628.4,367.1 632.1,365.9 634.5,366.5 638.2,359.2 640.6,362.8 643.0,358.6 644.8,376.8 648.5,372.6 654.0,374.4 659.4,366.5 663.7,372.6 666.7,372.6 668.0,376.8 672.9,374.4 674.7,359.2 677.7,356.8 680.2,359.2 682.6,366.5 686.2,367.1 688.7,373.8 692.3,369.5 694.7,384.1 699.0,380.5 701.4,387.8 704.5,383.5 707.5,376.8 709.3,379.3 713.0,375.0 716.6,367.7 720.3,362.2 722.7,359.2 726.9,366.5 731.2,363.5 737.3,367.1 741.5,364.7 744.6,371.4 747.6,379.9 749.4,373.8 753.7,365.9 756.1,357.4 757.9,345.2 760.4,341.0 764.0,336.7 767.6,335.5 770.1,340.4 772.5,346.4 774.3,339.2 778.6,334.3 782.2,331.9 784.7,331.3 786.5,337.9 788.3,334.3 795.6,329.4 799.2,334.3 802.3,337.3 804.1,345.2 806.5,341.0 808.5,340.0 812.5,351.6 815.0,348.0 818.2,345.9" fill="none" stroke="#d23ee0" stroke-width="1" shape-rendering="crispEdges"/></g>
<rect x="17.5" y="38.5" width="884" height="231.0" fill="none" stroke="#aabdcc"/>
<rect x="17.5" y="275.5" width="884" height="45.0" fill="none" stroke="#aabdcc"/>
<rect x="17.5" y="326.5" width="884" height="76.0" fill="none" stroke="#aabdcc"/>
<line x1="901" y1="61.5" x2="905" y2="61.5" stroke="#aabdcc"/>
<line x1="901" y1="95.5" x2="905" y2="95.5" stroke="#aabdcc"/>
<line x1="901" y1="128.5" x2="905" y2="128.5" stroke="#aabdcc"/>
<line x1="901" y1="162.5" x2="905" y2="162.5" stroke="#aabdcc"/>
<line x1="901" y1="196.5" x2="905" y2="196.5" stroke="#aabdcc"/>
<line x1="901" y1="230.5" x2="905" y2="230.5" stroke="#aabdcc"/>
<line x1="901" y1="297.5" x2="905" y2="297.5" stroke="#aabdcc"/>
<line x1="901" y1="368.5" x2="905" y2="368.5" stroke="#aabdcc"/>
<line x1="71.5" y1="402" x2="71.5" y2="405.5" stroke="#aabdcc"/>
<line x1="134.5" y1="402" x2="134.5" y2="405.5" stroke="#aabdcc"/>
<line x1="198.5" y1="402" x2="198.5" y2="405.5" stroke="#aabdcc"/>
<line x1="261.5" y1="402" x2="261.5" y2="405.5" stroke="#aabdcc"/>
<line x1="387.5" y1="402" x2="387.5" y2="405.5" stroke="#aabdcc"/>
<line x1="450.5" y1="402" x2="450.5" y2="405.5" stroke="#aabdcc"/>
<line x1="501.5" y1="402" x2="501.5" y2="405.5" stroke="#aabdcc"/>
<line x1="598.5" y1="402" x2="598.5" y2="405.5" stroke="#aabdcc"/>
<line x1="661.5" y1="402" x2="661.5" y2="405.5" stroke="#aabdcc"/>
<line x1="724.5" y1="402" x2="724.5" y2="405.5" stroke="#aabdcc"/>
<line x1="875.5" y1="402" x2="875.5" y2="405.5" stroke="#aabdcc"/>
<line x1="324.5" y1="402" x2="324.5" y2="405.5" stroke="#aabdcc"/>
<line x1="534.5" y1="402" x2="534.5" y2="405.5" stroke="#aabdcc"/>
<line x1="787.5" y1="402" x2="787.5" y2="405.5" stroke="#aabdcc"/>
<text x="908.5" y="68.0" font-size="11" fill="#f2f2f2" stroke="#f2f2f2" stroke-width="0.25">105.50</text>
<text x="908.5" y="102.0" font-size="11" fill="#f2f2f2" stroke="#f2f2f2" stroke-width="0.25">105.00</text>
<text x="908.5" y="135.0" font-size="11" fill="#f2f2f2" stroke="#f2f2f2" stroke-width="0.25">104.50</text>
<text x="908.5" y="169.0" font-size="11" fill="#f2f2f2" stroke="#f2f2f2" stroke-width="0.25">104.00</text>
<text x="908.5" y="203.0" font-size="11" fill="#f2f2f2" stroke="#f2f2f2" stroke-width="0.25">103.50</text>
<text x="908.5" y="237.0" font-size="11" fill="#f2f2f2" stroke="#f2f2f2" stroke-width="0.25">103.00</text>
<rect x="901" y="80" width="48" height="21" fill="#ffffff"/>
<text x="909" y="95" font-size="11" fill="#503f6c">105.07</text>
<text x="910.5" y="303.8" font-size="11" fill="#f2f2f2" stroke="#f2f2f2" stroke-width="0.25">+0.0</text>
<text x="909.5" y="375.3" font-size="11" fill="#f2f2f2" stroke="#f2f2f2" stroke-width="0.25">50</text>
<rect x="18" y="39" width="275" height="12.5" fill="#3b414b"/>
<text x="19.5" y="49.7" font-size="10.2" fill="#1818e6" textLength="133.3" lengthAdjust="spacingAndGlyphs">Exponential_Moving_Average</text>
<text x="157.9" y="49.7" font-size="10.2" fill="#e41818" textLength="133.3" lengthAdjust="spacingAndGlyphs">Exponential_Moving_Average</text>
<rect x="17" y="38" width="31" height="22" fill="#f0f0f0"/><rect x="17" y="38" width="31" height="4.5" fill="#c6c6c6"/>
<rect x="21.3" y="46.2" width="9.4" height="9.4" rx="1.5" fill="url(#lr)" stroke="#8c1010" stroke-width="0.6"/>
<rect x="34.3" y="46.2" width="9.4" height="9.4" rx="1.5" fill="url(#lb)" stroke="#10508c" stroke-width="0.6"/>
<text x="19.5" y="287.3" font-size="10" fill="#1c1c86" textLength="28" lengthAdjust="spacingAndGlyphs">MACD</text>
<text x="19.5" y="338.3" font-size="10.5" fill="#f0902c" textLength="15" lengthAdjust="spacingAndGlyphs">RSI</text>
<line x1="18.1" y1="379" x2="18.1" y2="406" stroke="#cfe6ee" stroke-width="2"/>
<path d="M18.3 379.5 H76.3 Q78.3 379.5 78.3 381.5 V396.5 Q78.3 398.5 76.3 398.5 H18.3 Z" fill="#5b6b82" stroke="#afc2d0"/>
<text x="25.6" y="393" font-size="11" fill="#f0f2f6">Нов 2020</text>
<line x1="324.8" y1="379" x2="324.8" y2="406" stroke="#cfe6ee" stroke-width="2"/>
<path d="M325.0 379.5 H383.0 Q385.0 379.5 385.0 381.5 V396.5 Q385.0 398.5 383.0 398.5 H325.0 Z" fill="#5b6b82" stroke="#afc2d0"/>
<text x="332.3" y="393" font-size="11" fill="#f0f2f6">Дек 2020</text>
<line x1="534.8" y1="379" x2="534.8" y2="406" stroke="#cfe6ee" stroke-width="2"/>
<path d="M535.0 379.5 H593.0 Q595.0 379.5 595.0 381.5 V396.5 Q595.0 398.5 593.0 398.5 H535.0 Z" fill="#5b6b82" stroke="#afc2d0"/>
<text x="542.3" y="393" font-size="11" fill="#f0f2f6">Янв 2021</text>
<line x1="787.8" y1="379" x2="787.8" y2="406" stroke="#cfe6ee" stroke-width="2"/>
<path d="M788.0 379.5 H846.0 Q848.0 379.5 848.0 381.5 V396.5 Q848.0 398.5 846.0 398.5 H788.0 Z" fill="#5b6b82" stroke="#afc2d0"/>
<text x="795.3" y="393" font-size="11" fill="#f0f2f6">Фев 2021</text>
<text x="70.7" y="425.2" font-size="11" fill="#f4f5f6" text-anchor="middle">9</text>
<text x="133.7" y="425.2" font-size="11" fill="#f4f5f6" text-anchor="middle">16</text>
<text x="197.7" y="425.2" font-size="11" fill="#f4f5f6" text-anchor="middle">23</text>
<text x="260.7" y="425.2" font-size="11" fill="#f4f5f6" text-anchor="middle">30</text>
<text x="323.7" y="425.2" font-size="11" fill="#f4f5f6" text-anchor="middle">7</text>
<text x="386.7" y="425.2" font-size="11" fill="#f4f5f6" text-anchor="middle">14</text>
<text x="449.7" y="425.2" font-size="11" fill="#f4f5f6" text-anchor="middle">21</text>
<text x="500.7" y="425.2" font-size="11" fill="#f4f5f6" text-anchor="middle">28</text>
<text x="533.7" y="425.2" font-size="11" fill="#f4f5f6" text-anchor="middle">4</text>
<text x="597.7" y="425.2" font-size="11" fill="#f4f5f6" text-anchor="middle">11</text>
<text x="660.7" y="425.2" font-size="11" fill="#f4f5f6" text-anchor="middle">18</text>
<text x="723.7" y="425.2" font-size="11" fill="#f4f5f6" text-anchor="middle">25</text>
<text x="786.7" y="425.2" font-size="11" fill="#f4f5f6" text-anchor="middle">1</text>
<text x="874.7" y="425.2" font-size="11" fill="#f4f5f6" text-anchor="middle">8</text>
</svg></body></html>
